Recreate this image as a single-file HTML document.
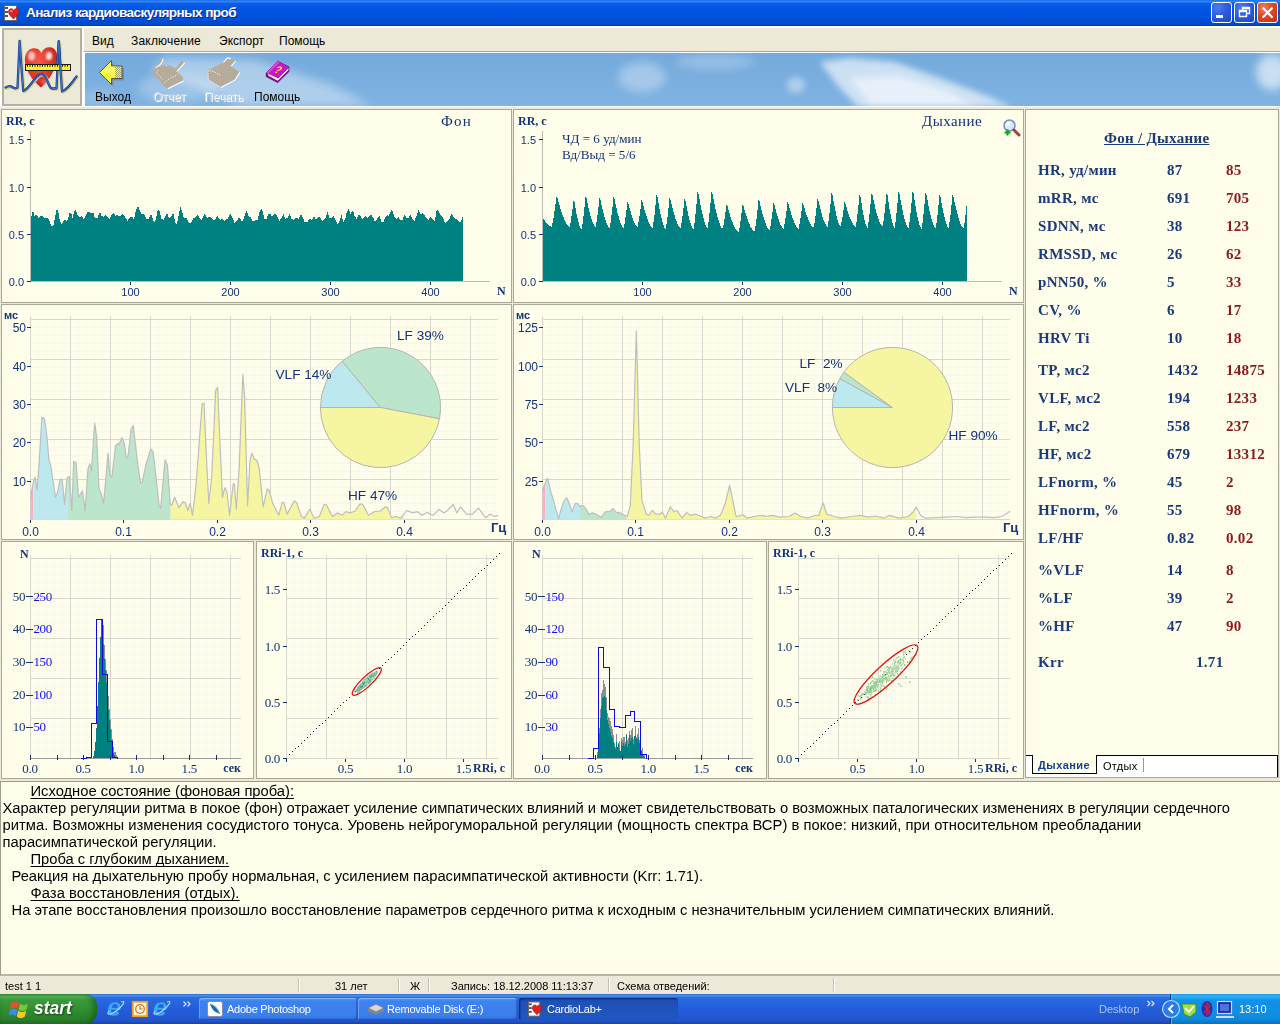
<!DOCTYPE html>
<html lang="ru"><head><meta charset="utf-8"><title>Анализ кардиоваскулярных проб</title>
<style>
*{box-sizing:border-box;margin:0;padding:0}
html,body{width:1280px;height:1024px;overflow:hidden;background:#ECE9D8;font-family:"Liberation Sans",sans-serif;}
.abs{position:absolute}
#title{left:0;top:0;width:1280px;height:26px;background:linear-gradient(#0A5FE8 0,#3C8CF8 4%,#0B5DE3 14%,#0054E3 40%,#0051DF 70%,#0148CE 92%,#0140BC 100%);}
#title .t{left:26px;top:5px;letter-spacing:-.6px;color:#fff;font:bold 13.6px "Liberation Sans",sans-serif;text-shadow:1px 1px 0 #0A2A80;white-space:nowrap}
.wb{top:2px;width:21px;height:21px;border:1px solid #fff;border-radius:3px;background:radial-gradient(circle at 30% 25%,#4C7CF0 0,#2C5CE0 45%,#1F47C8 100%);overflow:hidden}
.wb svg{position:absolute;left:-1px;top:-1px}
.wb.cl{background:radial-gradient(circle at 30% 25%,#F08060 0,#E04820 45%,#C03010 100%)}
#menubar{left:84px;top:28px;width:1196px;height:24px;background:#ECE9D8;border-bottom:1px solid #ACA899}
#menubar span{position:absolute;top:6px;font:12px "Liberation Sans",sans-serif;color:#000;white-space:nowrap}
#toolbar{left:85px;top:53px;width:1195px;height:53px;overflow:hidden;background:#7FB0E0}
.tb{position:absolute;top:37px;font:12px "Liberation Sans",sans-serif;white-space:nowrap;color:#000}
.tb.dis{color:#C8D4E0;text-shadow:1px 1px 0 #fff}
#logo{left:2px;top:28px;width:80px;height:78px;background:#ECE9D8;border:2px solid #B3B0A2;box-shadow:1px 1px 0 #fff,2px 0 0 #fff}
.panel{position:absolute;background:#FFFEEB;border:1px solid #A9A797;overflow:hidden}
.panel svg{position:absolute;left:-1px;top:-1px}
text{white-space:pre}
#rp{font-family:"Liberation Serif",serif;font-weight:bold;font-size:15px;color:#1B3A78;letter-spacing:.3px}
#rp div{position:absolute;white-space:nowrap;line-height:18px}
#rp .r{color:#8B1A1A}
#txt{left:0;top:781px;width:1280px;height:195px;background:#FFFEEB;border:1px solid #9D9B8C;border-width:1px 0 2px 1px;border-color:#9D9B8C #fff #B9B6A6 #9D9B8C;font:14.75px "Liberation Sans",sans-serif;color:#000;line-height:17px}
#txt div{position:absolute;white-space:nowrap}
#txt u{text-decoration:underline;text-underline-offset:2px;text-decoration-skip-ink:none;text-decoration-thickness:1px}
#status{left:0;top:976px;width:1280px;height:18px;background:#ECE9D8;font:11px "Liberation Sans",sans-serif}
#status span{position:absolute;top:4px;white-space:nowrap}
#status i{position:absolute;top:2px;width:2px;height:14px;border-left:1px solid #C5C2B2;border-right:1px solid #fff}
#task{left:0;top:994px;width:1280px;height:30px;background:linear-gradient(#3168D5 0,#4993E6 6%,#2A6BE0 12%,#245DDB 50%,#2254CC 90%,#1941A5 100%)}
#start{left:0;top:0;width:97px;height:30px;border-radius:0 12px 12px 0;background:linear-gradient(#3C9A3C 0,#5CBB5C 8%,#3C9A3C 20%,#2F8A2F 60%,#2A7A2A 100%);box-shadow:inset -3px 0 6px rgba(0,60,0,.5)}
#start b{position:absolute;left:34px;top:4px;color:#fff;font:italic bold 17.5px "Liberation Sans",sans-serif;text-shadow:1px 1px 2px #1A401A}
.tbtn{position:absolute;top:4px;height:22px;letter-spacing:-.25px;border-radius:3px;background:linear-gradient(#5C9CF5,#3C82F0 15%,#3A7FEC 80%,#2E6CD8);color:#fff;font:11px "Liberation Sans",sans-serif;box-shadow:inset 1px 1px 0 rgba(255,255,255,.25), inset -1px -1px 0 rgba(0,0,60,.25)}
.tbtn.act{background:linear-gradient(#1C4FB8,#1E52B8 30%,#2058C0);box-shadow:inset 1px 1px 2px rgba(0,0,40,.6)}
.tbtn span{position:absolute;left:28px;top:5px;white-space:nowrap}
#tray{top:0;height:30px;background:linear-gradient(#1A9AE8 0,#30B0F5 8%,#1292E8 20%,#0E8CE0 80%,#0A70C0 100%);border-left:1px solid #0A3A90;box-shadow:inset 1px 0 0 #40B8F8}
</style></head><body>
<div id="title" class="abs">
<svg class="abs" style="left:3.500px;top:4.500px" width="18" height="17" viewBox="0 0 18 17"><rect x="0.5" y="0.5" width="12" height="15" fill="#fff" stroke="#666"/><rect x="1" y="2" width="3" height="2" fill="#555"/><rect x="1" y="6" width="3" height="2" fill="#555"/><rect x="1" y="10" width="3" height="2" fill="#555"/><path d="M9.5 14 C4 9.5 3.5 5.5 6 4 C8 3 9.3 4.5 9.5 5.5 C9.7 4.5 11.5 3 13.5 4 C16 5.5 15 9.5 9.5 14Z" fill="#E02020" stroke="#A01010" stroke-width=".6"/><ellipse cx="7.3" cy="6.3" rx="1.3" ry="1" fill="#FF9A9A"/></svg>
<div class="abs t">Анализ кардиоваскулярных проб</div>
<div class="abs wb" style="left:1211px"><svg width="21" height="21"><rect x="5" y="13" width="7" height="3" fill="#fff"/></svg></div>
<div class="abs wb" style="left:1234px"><svg width="21" height="21"><path d="M8.5 5.5h7v6h-7z M8.5 6.5h7" fill="none" stroke="#fff" stroke-width="1.4"/><path d="M5.5 8.5h7v6h-7z" fill="#2C62DC" stroke="#fff" stroke-width="1.4"/><path d="M5.5 9.5h7" stroke="#fff" stroke-width="1.4"/></svg></div>
<div class="abs wb cl" style="left:1257px"><svg width="21" height="21"><path d="M6.300 6.300l8.600 8.600M14.900 6.300l-8.600 8.600" stroke="#fff" stroke-width="2.100" stroke-linecap="round"/></svg></div>
</div>
<div id="menubar" class="abs"><span style="left:8px">Вид</span><span style="left:47px;letter-spacing:.2px">Заключение</span><span style="left:135px">Экспорт</span><span style="left:195px">Помощь</span></div>
<div class="abs" style="left:84px;top:52px;width:1196px;height:1px;background:#fff"></div><div class="abs" style="left:0;top:26px;width:1280px;height:2px;background:#fff"></div><div class="abs" style="left:0;top:28px;width:2px;height:79px;background:#fff"></div>
<div id="toolbar" class="abs">
<svg class="abs" style="left:0;top:0" width="1195" height="54"><defs>
<linearGradient id="sky" x1="0" x2="0" y1="0" y2="1"><stop offset="0" stop-color="#74AADC"/><stop offset="1" stop-color="#80B3E2"/></linearGradient>
<filter id="bl" x="-20%" y="-50%" width="140%" height="200%"><feGaussianBlur stdDeviation="5"/></filter>
<filter id="bl2" x="-20%" y="-50%" width="140%" height="200%"><feGaussianBlur stdDeviation="3"/></filter>
</defs><rect width="1195" height="54" fill="url(#sky)"/>
<g transform="translate(-85,-53)"><g filter="url(#bl)" fill="#fff">
<path d="M165 57 L255 60 L330 84 L372 106 L240 106 L200 88 L150 72Z" opacity=".38"/>
<ellipse cx="178" cy="88" rx="40" ry="14" opacity=".25"/>
<ellipse cx="100" cy="98" rx="18" ry="8" opacity=".18"/>
<ellipse cx="642" cy="77" rx="24" ry="15" opacity=".33"/>
<ellipse cx="715" cy="62" rx="40" ry="7" opacity=".25"/>
<ellipse cx="1272" cy="72" rx="16" ry="18" opacity=".6"/>
</g>
<g filter="url(#bl2)" fill="#fff">
<ellipse cx="796" cy="85" rx="9" ry="8" opacity=".4"/>
<path d="M820 62 L850 58 L895 62 L940 78 L985 95 L1012 107 L858 107 L838 86Z" opacity=".62"/>
<path d="M850 78 L900 76 L950 92 L975 107 L872 107Z" opacity=".5"/>
</g></g></svg>
<svg class="abs" style="left:0;top:0" width="260" height="53" viewBox="85 53 260 53">
<defs><pattern id="dith" width="2" height="2" patternUnits="userSpaceOnUse"><rect width="1" height="1" fill="#8A8A80"/><rect x="1" y="1" width="1" height="1" fill="#8A8A80"/></pattern></defs>
<!-- exit arrow -->
<path d="M101.500 74.500 L113.500 62.500 V68 H124 V80.500 H113.500 V86.500Z" fill="#85858A" opacity=".9"/>
<path d="M99.500 72.500 L111.500 60.500 V66 H122 V78.500 H111.500 V84.500Z" fill="#F6F63C" stroke="#4A4A3A" stroke-width=".9" stroke-linejoin="round"/>
<path d="M100.800 72.500 L111 62.300 V66.500 H116 V72.500Z" fill="#FFFF90" opacity=".55"/>
<rect x="115" y="66.500" width="7" height="11.500" fill="url(#dith)" opacity=".8"/>
<!-- report icon (disabled) -->
<g fill="#B6AC9C"><path d="M152.300 71.200 L158.700 66.900 L165.600 64.700 L169.900 65.200 L175.900 68.600 L181.100 60.900 L184.100 62.600 L176.800 71.200 L183.200 77.600 L182.800 80.600 L167.300 88.400 L164.700 86.600 L152.300 73.800Z"/><path d="M153 66.500 C156 65.500 160.500 62 161.500 58.500 L159 57.800 L162.800 58.200 C162.500 62.500 158 66 154 67.800Z"/></g>
<path d="M167.800 88.800 L183.500 81 M176.800 71.500 L184.600 62.800 M155.500 67.500 C159 66 162.800 62.500 163 58.500" fill="none" stroke="#fff" stroke-width="1.100"/>
<path d="M156.500 72.500 L158.500 70 M157 73.500 L162.500 79.500 M164 83 L169 79 M170.500 78 L178 74.500 M166 65.500h2.500" fill="none" stroke="#fff" stroke-width="1" stroke-dasharray="1 1.600"/>
<!-- print icon (disabled) -->
<path d="M207.700 70.300 L223.200 62.600 L227.500 57.900 L235.200 60.900 L230.900 66 L239.500 72 L234.400 79.800 L220.600 87.100 L208.600 79.800Z" fill="#B6AC9C"/>
<path d="M221 87.600 L234.900 80.200 L240 72.200 M231.200 66.200 L235.800 61 M223.500 62.500 L227.500 57.700 L231 58.800" fill="none" stroke="#fff" stroke-width="1.100"/>
<path d="M208.300 79.500 L208 71 L211.500 70.500 L220 75 M209.500 80.800 L219.500 86.800" fill="none" stroke="#fff" stroke-width="1" stroke-dasharray="1.200 1.400"/>
<!-- help book -->
<path d="M266.200 72.900 L277.700 61.300 L288.900 66.900 L288.900 71.600 L277.700 82.600 L266.200 76.500Z" fill="#8C008C" stroke="#500050" stroke-width=".7" stroke-linejoin="round"/>
<path d="M268.200 75.800 L277.800 80.800 L288.500 70 L288.500 68 L278 78.300 L268.200 73.500Z" fill="#F2EEE6"/>
<path d="M266.200 72.900 L277.700 61.300 L288.900 66.900 L278.200 77.600Z" fill="#C818C8"/>
<path d="M266.200 72.900 L277.700 61.300 L279.500 62.200 L268 73.800Z" fill="#E860E8" opacity=".7"/>
<text x="0" y="0" font-family="'Liberation Sans',sans-serif" font-weight="bold" font-size="10.500" fill="#FFE818" transform="translate(278.300 69.800) rotate(14) skewX(-20) translate(-3.200 3.600)">?</text>
</svg>
<span class="tb" style="left:10px">Выход</span><span class="tb dis" style="left:68px">Отчет</span><span class="tb dis" style="left:119px">Печать</span><span class="tb" style="left:169px">Помощь</span>
</div>
<div class="abs" style="left:84px;top:53px;width:1px;height:53px;background:#fff"></div>
<div class="abs" style="left:84px;top:106px;width:1196px;height:1px;background:#fff"></div>
<div id="logo" class="abs"><svg class="abs" style="left:0;top:0" width="76" height="74" viewBox="4 30 76 74">
<defs><radialGradient id="hg" cx="0.42" cy="0.35" r="0.75"><stop offset="0" stop-color="#F25A4A"/><stop offset="0.55" stop-color="#E23428"/><stop offset="1" stop-color="#A81A14"/></radialGradient>
<filter id="hb" x="-20%" y="-20%" width="140%" height="140%"><feGaussianBlur stdDeviation="1.2"/></filter></defs>
<path d="M41 87.500 C22 72 21 52 32 48.500 C37.500 47 40.500 50.500 41.500 53.500 C42.500 49.500 46 46 51.500 47.500 C62 51 58 72 41 87.500Z" fill="#E8E4E0" stroke="#E8E4E0" stroke-width="3" opacity=".8"/>
<path d="M41 87.500 C22 72 21 52 32 48.500 C37.500 47 40.500 50.500 41.500 53.500 C42.500 49.500 46 46 51.500 47.500 C62 51 58 72 41 87.500Z" fill="url(#hg)"/>
<g filter="url(#hb)"><ellipse cx="31.500" cy="56" rx="3.500" ry="4.500" fill="#FFD0C8" opacity=".9"/><ellipse cx="49" cy="56" rx="3" ry="4" fill="#FFE8E0"/><ellipse cx="45" cy="82" rx="4" ry="2.500" fill="#F08070" opacity=".6"/></g>
<g fill="none" stroke-linejoin="round" stroke-linecap="round">
<path id="ecg" d="M5.500 87.500 C8 86 10 85.500 12 87 C14 88.500 16 88.500 17.500 87.500 L19.600 41 L23.200 91 C27 90 31 84 34 80 C37 76 39 74 41.500 74 C45 74 47 80 49 85 C50 87.500 51 88.500 52.500 88.500 L56.500 88.500 L58.800 41.500 L62 91.500 C66 90 70 86 76.500 76.500" stroke="#D8D090" stroke-width="3.300" opacity=".9" transform="translate(.8,.8)"/>
<path d="M5.500 87.500 C8 86 10 85.500 12 87 C14 88.500 16 88.500 17.500 87.500 L19.600 41 L23.200 91 C27 90 31 84 34 80 C37 76 39 74 41.500 74 C45 74 47 80 49 85 C50 87.500 51 88.500 52.500 88.500 L56.500 88.500 L58.800 41.500 L62 91.500 C66 90 70 86 76.500 76.500" stroke="#1C3F8C" stroke-width="2.300"/>
<path d="M5.500 87.500 C8 86 10 85.500 12 87 C14 88.500 16 88.500 17.500 87.500 L19.600 41 L23.200 91 C27 90 31 84 34 80 C37 76 39 74 41.500 74 C45 74 47 80 49 85 C50 87.500 51 88.500 52.500 88.500 L56.500 88.500 L58.800 41.500 L62 91.500 C66 90 70 86 76.500 76.500" stroke="#3C78C8" stroke-width="1"/>
</g>
<rect x="25.500" y="64.500" width="45" height="6" fill="#FFF020" stroke="#181818" stroke-width="1"/>
<path d="M27.500 65v1.800M30 65v1.800M32.500 65v1.800M35 65v1.800M37.500 65v1.800M40 65v1.800M42.500 65v1.800M45 65v1.800M47.500 65v1.800M50 65v1.800M52.500 65v1.800M55 65v1.800M57.500 65v1.800M60 65v1.800M62.500 65v1.800M65 65v1.800M67.500 65v1.800" stroke="#181818" stroke-width="1"/>
<path d="M57.200 63.500 L58.800 41.500 L60.600 71" fill="none" stroke="#1C3F8C" stroke-width="2.300" stroke-linejoin="round"/><path d="M57.200 63.500 L58.800 41.500 L60.600 71" fill="none" stroke="#3C78C8" stroke-width="1" stroke-linejoin="round"/>
</svg></div>
<div class="panel" style="left:1px;top:109px;width:511px;height:194px"></div><div class="panel" style="left:513px;top:109px;width:511px;height:194px"></div><div class="panel" style="left:1px;top:304px;width:511px;height:236px"></div><div class="panel" style="left:513px;top:304px;width:511px;height:236px"></div><div class="panel" style="left:1px;top:541px;width:253px;height:238px"></div><div class="panel" style="left:256px;top:541px;width:256px;height:238px"></div><div class="panel" style="left:513px;top:541px;width:254px;height:238px"></div><div class="panel" style="left:768px;top:541px;width:256px;height:238px"></div>
<svg class="abs" style="left:0;top:0" width="1280" height="1024" viewBox="0 0 1280 1024">
<path d="M31 281.5V216H32V212H33V212H34V216H35V215H36V215H37V216H38V218H39V217H40V216H41V216H42V216H43V217H44V218H45V218H46V218H47V218H48V219H49V221H50V224H51V226H52V226H53V225H54V220H55V215H56V210H57V210H58V213H59V219H60V222H61V224H62V223H63V221H64V220H65V220H66V221H67V220H68V217H69V213H70V213H71V214H72V218H73V214H74V211H75V210H76V212H77V215H78V216H79V217H80V217H81V216H82V217H83V219H84V218H85V216H86V214H87V212H88V212H89V212H90V213H91V213H92V213H93V213H94V217H95V218H96V218H97V218H98V215H99V213H100V213H101V216H102V216H103V217H104V216H105V215H106V216H107V217H108V218H109V219H110V217H111V215H112V214H113V213H114V214H115V216H116V215H117V215H118V216H119V216H120V216H121V215H122V214H123V215H124V216H125V218H126V219H127V221H128V219H129V218H130V217H131V217H132V217H133V219H134V217H135V212H136V209H137V207H138V207H139V210H140V212H141V214H142V214H143V214H144V215H145V217H146V219H147V219H148V219H149V217H150V215H151V215H152V218H153V221H154V222H155V220H156V216H157V211H158V210H159V211H160V215H161V219H162V219H163V220H164V218H165V216H166V214H167V214H168V217H169V218H170V217H171V216H172V214H173V214H174V219H175V223H176V224H177V221H178V216H179V211H180V207H181V210H182V213H183V217H184V218H185V218H186V218H187V220H188V222H189V223H190V223H191V222H192V220H193V218H194V218H195V217H196V216H197V215H198V216H199V218H200V219H201V220H202V218H203V216H204V214H205V215H206V217H207V218H208V217H209V217H210V217H211V218H212V219H213V220H214V220H215V219H216V217H217V216H218V218H219V219H220V220H221V219H222V219H223V220H224V221H225V220H226V219H227V219H228V217H229V215H230V214H231V216H232V218H233V220H234V223H235V222H236V221H237V220H238V218H239V218H240V219H241V221H242V221H243V219H244V216H245V213H246V211H247V213H248V216H249V217H250V217H251V219H252V221H253V221H254V221H255V220H256V220H257V220H258V216H259V212H260V210H261V209H262V211H263V215H264V219H265V219H266V219H267V216H268V214H269V214H270V214H271V216H272V216H273V215H274V214H275V214H276V215H277V217H278V219H279V221H280V219H281V218H282V216H283V214H284V217H285V219H286V218H287V218H288V216H289V214H290V216H291V219H292V219H293V220H294V219H295V218H296V218H297V218H298V219H299V217H300V215H301V215H302V217H303V219H304V222H305V222H306V222H307V222H308V220H309V219H310V219H311V220H312V219H313V217H314V217H315V219H316V219H317V218H318V217H319V217H320V218H321V220H322V221H323V220H324V219H325V218H326V215H327V212H328V215H329V218H330V218H331V218H332V217H333V216H334V218H335V220H336V222H337V224H338V223H339V221H340V218H341V215H342V219H343V222H344V220H345V218H346V213H347V211H348V209H349V211H350V214H351V212H352V211H353V212H354V216H355V217H356V219H357V217H358V215H359V215H360V216H361V218H362V219H363V218H364V217H365V216H366V217H367V218H368V217H369V216H370V215H371V215H372V217H373V218H374V221H375V221H376V220H377V218H378V217H379V216H380V219H381V222H382V222H383V222H384V219H385V217H386V216H387V215H388V216H389V214H390V212H391V210H392V211H393V214H394V217H395V218H396V219H397V218H398V217H399V219H400V220H401V220H402V220H403V217H404V215H405V216H406V218H407V218H408V218H409V216H410V215H411V217H412V219H413V220H414V221H415V218H416V216H417V213H418V210H419V212H420V214H421V214H422V213H423V214H424V215H425V217H426V218H427V219H428V220H429V218H430V217H431V218H432V219H433V220H434V221H435V217H436V211H437V210H438V211H439V213H440V215H441V216H442V217H443V219H444V222H445V223H446V222H447V221H448V220H449V219H450V216H451V214H452V215H453V217H454V218H455V219H456V219H457V220H458V221H459V222H460V222H461V220H462V217H463V281.5Z" fill="#008080" shape-rendering="crispEdges"/>
<path d="M30.5 131V282M30 281.5H490" stroke="#BDBDB5" fill="none" shape-rendering="crispEdges"/>
<text x="24" y="144.0" font-family="'Liberation Sans',sans-serif" font-size="11" font-weight="normal" fill="#12337A" text-anchor="end" >1.5</text>
<text x="24" y="192.0" font-family="'Liberation Sans',sans-serif" font-size="11" font-weight="normal" fill="#12337A" text-anchor="end" >1.0</text>
<text x="24" y="239.0" font-family="'Liberation Sans',sans-serif" font-size="11" font-weight="normal" fill="#12337A" text-anchor="end" >0.5</text>
<text x="24" y="286.0" font-family="'Liberation Sans',sans-serif" font-size="11" font-weight="normal" fill="#12337A" text-anchor="end" >0.0</text>
<text x="130.5" y="296" font-family="'Liberation Sans',sans-serif" font-size="11" font-weight="normal" fill="#12337A" text-anchor="middle" >100</text>
<text x="230.5" y="296" font-family="'Liberation Sans',sans-serif" font-size="11" font-weight="normal" fill="#12337A" text-anchor="middle" >200</text>
<text x="330.5" y="296" font-family="'Liberation Sans',sans-serif" font-size="11" font-weight="normal" fill="#12337A" text-anchor="middle" >300</text>
<text x="430.5" y="296" font-family="'Liberation Sans',sans-serif" font-size="11" font-weight="normal" fill="#12337A" text-anchor="middle" >400</text>
<path d="M27 139.5H31M27 187.5H31M27 234.5H31M27 281.5H31M130.5 282V285M230.5 282V285M330.5 282V285M430.5 282V285" stroke="#12337A" fill="none" shape-rendering="crispEdges"/>
<text x="6" y="125" font-family="'Liberation Serif',serif" font-size="12" font-weight="bold" fill="#12337A" text-anchor="start" >RR, c</text>
<text x="497" y="295" font-family="'Liberation Serif',serif" font-size="12" font-weight="bold" fill="#12337A" text-anchor="start" >N</text>
<text x="441" y="125.5" font-family="'Liberation Serif',serif" font-size="15" font-weight="normal" fill="#12337A" text-anchor="start" letter-spacing="1.2">Фон</text>
<path d="M543 281.5V219H544V220H545V222H546V223H547V224H548V225H549V226H550V226H551V227H552V223H553V218H554V211H555V204H556V197H557V198H558V202H559V205H560V209H561V212H562V215H563V217H564V220H565V222H566V224H567V225H568V226H569V227H570V223H571V216H572V209H573V201H574V202H575V208H576V214H577V218H578V222H579V226H580V228H581V229H582V224H583V216H584V207H585V197H586V198H587V203H588V208H589V212H590V216H591V219H592V222H593V224H594V226H595V227H596V222H597V215H598V207H599V198H600V200H601V205H602V209H603V213H604V217H605V220H606V223H607V225H608V227H609V228H610V223H611V215H612V207H613V197H614V199H615V204H616V208H617V213H618V216H619V220H620V223H621V225H622V227H623V228H624V224H625V217H626V210H627V202H628V204H629V208H630V211H631V215H632V218H633V221H634V223H635V225H636V226H637V227H638V222H639V216H640V209H641V200H642V202H643V206H644V210H645V213H646V216H647V219H648V222H649V224H650V226H651V227H652V228H653V222H654V215H655V205H656V195H657V197H658V203H659V209H660V214H661V218H662V222H663V225H664V228H665V229H666V224H667V217H668V208H669V198H670V200H671V204H672V208H673V212H674V215H675V219H676V221H677V224H678V226H679V227H680V228H681V223H682V216H683V208H684V199H685V201H686V206H687V211H688V216H689V220H690V223H691V226H692V228H693V229H694V223H695V214H696V204H697V192H698V194H699V199H700V205H701V210H702V214H703V218H704V222H705V225H706V227H707V228H708V222H709V213H710V203H711V192H712V194H713V199H714V204H715V209H716V213H717V217H718V220H719V223H720V226H721V228H722V228H723V225H724V219H725V212H726V205H727V206H728V210H729V213H730V217H731V220H732V222H733V225H734V227H735V229H736V230H737V231H738V232H739V228H740V221H741V213H742V205H743V206H744V210H745V213H746V216H747V219H748V222H749V224H750V227H751V228H752V230H753V231H754V231H755V226H756V219H757V210H758V200H759V201H760V206H761V210H762V214H763V217H764V220H765V223H766V226H767V228H768V229H769V230H770V226H771V219H772V212H773V203H774V205H775V209H776V213H777V216H778V219H779V222H780V225H781V226H782V228H783V229H784V224H785V218H786V211H787V202H788V204H789V208H790V211H791V215H792V218H793V220H794V223H795V225H796V227H797V228H798V229H799V224H800V218H801V211H802V203H803V205H804V208H805V212H806V215H807V217H808V220H809V222H810V224H811V226H812V227H813V227H814V223H815V216H816V208H817V199H818V201H819V205H820V209H821V213H822V217H823V220H824V222H825V224H826V226H827V227H828V221H829V213H830V204H831V193H832V195H833V201H834V206H835V211H836V216H837V220H838V223H839V225H840V226H841V222H842V217H843V210H844V202H845V204H846V207H847V211H848V214H849V217H850V219H851V221H852V223H853V225H854V226H855V227H856V222H857V214H858V205H859V195H860V197H861V203H862V210H863V215H864V220H865V224H866V226H867V228H868V222H869V214H870V204H871V194H872V195H873V200H874V204H875V209H876V213H877V216H878V219H879V222H880V224H881V225H882V226H883V221H884V213H885V204H886V194H887V195H888V202H889V209H890V214H891V219H892V223H893V226H894V228H895V222H896V213H897V203H898V192H899V194H900V200H901V205H902V210H903V215H904V219H905V222H906V225H907V227H908V228H909V222H910V213H911V203H912V192H913V193H914V200H915V206H916V212H917V217H918V221H919V225H920V227H921V229H922V223H923V214H924V204H925V193H926V195H927V200H928V206H929V211H930V215H931V219H932V222H933V225H934V227H935V228H936V223H937V215H938V205H939V195H940V197H941V203H942V208H943V213H944V217H945V221H946V224H947V227H948V228H949V222H950V215H951V205H952V195H953V197H954V202H955V206H956V210H957V214H958V218H959V221H960V224H961V226H962V227H963V228H964V223H965V215H966V206H967V281.5Z" fill="#008080" shape-rendering="crispEdges"/>
<path d="M542.5 131V282M542 281.5H1002" stroke="#BDBDB5" fill="none" shape-rendering="crispEdges"/>
<text x="536" y="144.0" font-family="'Liberation Sans',sans-serif" font-size="11" font-weight="normal" fill="#12337A" text-anchor="end" >1.5</text>
<text x="536" y="192.0" font-family="'Liberation Sans',sans-serif" font-size="11" font-weight="normal" fill="#12337A" text-anchor="end" >1.0</text>
<text x="536" y="239.0" font-family="'Liberation Sans',sans-serif" font-size="11" font-weight="normal" fill="#12337A" text-anchor="end" >0.5</text>
<text x="536" y="286.0" font-family="'Liberation Sans',sans-serif" font-size="11" font-weight="normal" fill="#12337A" text-anchor="end" >0.0</text>
<text x="642.5" y="296" font-family="'Liberation Sans',sans-serif" font-size="11" font-weight="normal" fill="#12337A" text-anchor="middle" >100</text>
<text x="742.5" y="296" font-family="'Liberation Sans',sans-serif" font-size="11" font-weight="normal" fill="#12337A" text-anchor="middle" >200</text>
<text x="842.5" y="296" font-family="'Liberation Sans',sans-serif" font-size="11" font-weight="normal" fill="#12337A" text-anchor="middle" >300</text>
<text x="942.5" y="296" font-family="'Liberation Sans',sans-serif" font-size="11" font-weight="normal" fill="#12337A" text-anchor="middle" >400</text>
<path d="M539 139.5H543M539 187.5H543M539 234.5H543M539 281.5H543M642.5 282V285M742.5 282V285M842.5 282V285M942.5 282V285" stroke="#12337A" fill="none" shape-rendering="crispEdges"/>
<text x="518" y="125" font-family="'Liberation Serif',serif" font-size="12" font-weight="bold" fill="#12337A" text-anchor="start" >RR, c</text>
<text x="1009" y="295" font-family="'Liberation Serif',serif" font-size="12" font-weight="bold" fill="#12337A" text-anchor="start" >N</text>
<text x="922" y="125.5" font-family="'Liberation Serif',serif" font-size="15" font-weight="normal" fill="#12337A" text-anchor="start" letter-spacing="0.45">Дыхание</text>
<text x="562" y="142.5" font-family="'Liberation Serif',serif" font-size="13.1" font-weight="normal" fill="#12337A" text-anchor="start" >ЧД = 6 уд/мин</text>
<text x="562" y="159" font-family="'Liberation Serif',serif" font-size="13.1" font-weight="normal" fill="#12337A" text-anchor="start" >Вд/Выд = 5/6</text>
<g transform="translate(1003,119)"><circle cx="6.500" cy="6.500" r="5.500" fill="#D8ECFF" stroke="#7090C0" stroke-width="1.500"/><circle cx="5" cy="5" r="2" fill="#fff"/><path d="M11 11l5 5" stroke="#A04040" stroke-width="3" stroke-linecap="round"/><path d="M1.500 13.500h6M4.500 10.500v6" stroke="#10A010" stroke-width="2.200"/></g>
<path d="M38.5 319V519M46.5 319V519M54.5 319V519M62.5 319V519M78.5 319V519M86.5 319V519M94.5 319V519M102.5 319V519M118.5 319V519M126.5 319V519M134.5 319V519M142.5 319V519M158.5 319V519M166.5 319V519M174.5 319V519M182.5 319V519M198.5 319V519M206.5 319V519M214.5 319V519M222.5 319V519M238.5 319V519M246.5 319V519M254.5 319V519M262.5 319V519M278.5 319V519M286.5 319V519M294.5 319V519M302.5 319V519M318.5 319V519M326.5 319V519M334.5 319V519M342.5 319V519M358.5 319V519M366.5 319V519M374.5 319V519M382.5 319V519M398.5 319V519M406.5 319V519M414.5 319V519M422.5 319V519M438.5 319V519M446.5 319V519M454.5 319V519M462.5 319V519M478.5 319V519M486.5 319V519M494.5 319V519M30 511.5H498M30 503.5H498M30 495.5H498M30 487.5H498M30 471.5H498M30 463.5H498M30 455.5H498M30 447.5H498M30 431.5H498M30 423.5H498M30 415.5H498M30 407.5H498M30 391.5H498M30 383.5H498M30 375.5H498M30 367.5H498M30 351.5H498M30 343.5H498M30 335.5H498M30 327.5H498" stroke="#F7F7EC" stroke-width="1" fill="none" shape-rendering="crispEdges"/>
<path d="M30.5 316V519M70.5 316V519M110.5 316V519M150.5 316V519M190.5 316V519M230.5 316V519M270.5 316V519M310.5 316V519M350.5 316V519M390.5 316V519M430.5 316V519M470.5 316V519M30 519.5H498M30 479.5H498M30 439.5H498M30 399.5H498M30 359.5H498M30 319.5H498" stroke="#D7D7CF" stroke-width="1" fill="none" shape-rendering="crispEdges"/>
<path d="M30.5 519.5L30.5 498.5L30.6 498.5L31.6 491.4L33.3 482.7L33.3 519.5Z" fill="#F4B2C0"/>
<path d="M33.3 519.5L33.3 482.7L33.5 481.8L35.2 477.0L37.1 490.2L39.0 465.0L41.9 417.2L44.3 418.4L46.6 433.9L49.0 460.3L50.7 465.0L53.1 481.8L55.5 497.3L57.4 492.5L60.3 479.4L62.2 479.4L64.6 504.5L67.0 478.2L67.9 477.6L67.9 519.5Z" fill="#BDE9EE"/>
<path d="M67.9 519.5L67.9 477.6L69.4 476.5L71.8 510.5L73.7 461.5L76.1 462.6L78.5 497.3L82.5 490.9L85.2 510.5L88.0 468.6L89.9 463.8L91.4 471.0L94.7 423.2L96.6 436.3L99.0 489.0L100.9 492.5L103.6 503.3L108.1 453.1L110.0 475.8L111.9 477.0L115.5 445.9L117.9 443.5L118.9 444.7L122.0 437.5L124.4 443.5L126.3 457.9L128.0 456.7L131.1 429.2L133.2 425.6L135.1 441.1L137.5 462.6L140.6 483.0L142.3 481.8L145.9 465.0L150.7 448.8L153.1 451.9L155.5 472.2L159.1 505.7L160.7 508.1L165.0 459.8L167.4 465.0L170.3 504.5L170.7 504.7L170.7 519.5Z" fill="#BCE6CB"/>
<path d="M170.7 519.5L170.7 504.7L171.7 505.2L174.6 497.3L178.9 507.6L183.0 501.6L185.4 502.8L187.8 510.5L190.2 503.3L192.5 515.3L196.1 484.2L202.1 404.0L204.0 402.9L206.2 453.1L208.8 503.3L211.7 477.0L215.7 390.4L217.7 387.3L219.6 433.9L222.4 497.3L224.8 487.8L226.8 491.4L229.6 515.3L233.2 483.7L234.4 484.2L236.3 509.3L239.2 467.4L242.8 374.1L244.5 395.7L247.6 505.7L250.0 460.3L251.9 453.1L254.3 459.1L256.7 460.3L259.1 467.4L263.2 506.9L267.2 489.0L269.1 490.2L272.7 503.3L278.7 515.3L282.3 502.1L284.0 502.8L287.1 514.1L294.3 500.9L296.6 502.8L301.4 516.5L304.5 518.1L309.8 509.3L314.1 518.1L319.4 516.5L324.1 504.5L326.5 505.2L332.5 516.5L337.3 512.9L342.1 515.3L345.7 511.7L350.5 512.9L355.2 511.0L360.0 503.8L362.9 504.5L368.4 515.3L374.4 511.7L380.4 511.0L385.1 506.9L387.5 507.6L391.6 517.7L395.9 516.5L400.7 518.1L404.3 513.5L404.3 519.5Z" fill="#F6F6A2"/>
<path d="M30.6 498.5L31.6 491.4L33.5 481.8L35.2 477.0L37.1 490.2L39.0 465.0L41.9 417.2L44.3 418.4L46.6 433.9L49.0 460.3L50.7 465.0L53.1 481.8L55.5 497.3L57.4 492.5L60.3 479.4L62.2 479.4L64.6 504.5L67.0 478.2L69.4 476.5L71.8 510.5L73.7 461.5L76.1 462.6L78.5 497.3L82.5 490.9L85.2 510.5L88.0 468.6L89.9 463.8L91.4 471.0L94.7 423.2L96.6 436.3L99.0 489.0L100.9 492.5L103.6 503.3L108.1 453.1L110.0 475.8L111.9 477.0L115.5 445.9L117.9 443.5L118.9 444.7L122.0 437.5L124.4 443.5L126.3 457.9L128.0 456.7L131.1 429.2L133.2 425.6L135.1 441.1L137.5 462.6L140.6 483.0L142.3 481.8L145.9 465.0L150.7 448.8L153.1 451.9L155.5 472.2L159.1 505.7L160.7 508.1L165.0 459.8L167.4 465.0L170.3 504.5L171.7 505.2L174.6 497.3L178.9 507.6L183.0 501.6L185.4 502.8L187.8 510.5L190.2 503.3L192.5 515.3L196.1 484.2L202.1 404.0L204.0 402.9L206.2 453.1L208.8 503.3L211.7 477.0L215.7 390.4L217.7 387.3L219.6 433.9L222.4 497.3L224.8 487.8L226.8 491.4L229.6 515.3L233.2 483.7L234.4 484.2L236.3 509.3L239.2 467.4L242.8 374.1L244.5 395.7L247.6 505.7L250.0 460.3L251.9 453.1L254.3 459.1L256.7 460.3L259.1 467.4L263.2 506.9L267.2 489.0L269.1 490.2L272.7 503.3L278.7 515.3L282.3 502.1L284.0 502.8L287.1 514.1L294.3 500.9L296.6 502.8L301.4 516.5L304.5 518.1L309.8 509.3L314.1 518.1L319.4 516.5L324.1 504.5L326.5 505.2L332.5 516.5L337.3 512.9L342.1 515.3L345.7 511.7L350.5 512.9L355.2 511.0L360.0 503.8L362.9 504.5L368.4 515.3L374.4 511.7L380.4 511.0L385.1 506.9L387.5 507.6L391.6 517.7L395.9 516.5L400.7 518.1L406.7 510.5L412.6 512.9L417.4 511.7L422.2 515.3L427.0 512.4L433.0 515.3L439.0 509.3L443.7 512.9L447.3 510.5L453.3 504.5L456.9 512.9L460.5 506.9L466.5 514.1L472.4 514.1L478.4 508.1L485.6 517.7L490.4 514.1L494.0 516.5L498.3 515.3" fill="none" stroke="#BEBEBE" stroke-width="1.2" stroke-linejoin="round"/>
<text x="26" y="332.0" font-family="'Liberation Sans',sans-serif" font-size="12" font-weight="normal" fill="#12337A" text-anchor="end" >50</text>
<text x="26" y="371.0" font-family="'Liberation Sans',sans-serif" font-size="12" font-weight="normal" fill="#12337A" text-anchor="end" >40</text>
<text x="26" y="409.0" font-family="'Liberation Sans',sans-serif" font-size="12" font-weight="normal" fill="#12337A" text-anchor="end" >30</text>
<text x="26" y="447.0" font-family="'Liberation Sans',sans-serif" font-size="12" font-weight="normal" fill="#12337A" text-anchor="end" >20</text>
<text x="26" y="486.0" font-family="'Liberation Sans',sans-serif" font-size="12" font-weight="normal" fill="#12337A" text-anchor="end" >10</text>
<text x="30.5" y="536" font-family="'Liberation Sans',sans-serif" font-size="12" font-weight="normal" fill="#12337A" text-anchor="middle" >0.0</text>
<text x="123.5" y="536" font-family="'Liberation Sans',sans-serif" font-size="12" font-weight="normal" fill="#12337A" text-anchor="middle" >0.1</text>
<text x="217.5" y="536" font-family="'Liberation Sans',sans-serif" font-size="12" font-weight="normal" fill="#12337A" text-anchor="middle" >0.2</text>
<text x="310.5" y="536" font-family="'Liberation Sans',sans-serif" font-size="12" font-weight="normal" fill="#12337A" text-anchor="middle" >0.3</text>
<text x="404.5" y="536" font-family="'Liberation Sans',sans-serif" font-size="12" font-weight="normal" fill="#12337A" text-anchor="middle" >0.4</text>
<path d="M27 327.5H31M27 366.5H31M27 404.5H31M27 442.5H31M27 481.5H31M30.5 520V523M123.5 520V523M217.5 520V523M310.5 520V523M404.5 520V523" stroke="#12337A" fill="none" shape-rendering="crispEdges"/>
<text x="4" y="319" font-family="'Liberation Sans',sans-serif" font-size="11" font-weight="bold" fill="#12337A" text-anchor="start" >мс</text>
<text x="491" y="532" font-family="'Liberation Sans',sans-serif" font-size="13" font-weight="bold" fill="#12337A" text-anchor="start" >Гц</text>
<path d="M380.5 407.5L320.40 407.50A60.1 60.1 0 0 1 342.19 361.19Z" fill="#BDE9EE" stroke="#B4B4B4" stroke-width="1"/>
<path d="M380.5 407.5L342.19 361.19A60.1 60.1 0 0 1 439.54 418.76Z" fill="#BCE6CB" stroke="#B4B4B4" stroke-width="1"/>
<path d="M380.5 407.5L439.54 418.76A60.1 60.1 0 0 1 320.40 407.50Z" fill="#F6F6A2" stroke="#B4B4B4" stroke-width="1"/>
<text x="397" y="339.5" font-family="'Liberation Sans',sans-serif" font-size="13.6" font-weight="normal" fill="#12337A" text-anchor="start" xml:space="preserve">LF 39%</text>
<text x="275.5" y="379" font-family="'Liberation Sans',sans-serif" font-size="13.6" font-weight="normal" fill="#12337A" text-anchor="start" xml:space="preserve">VLF 14%</text>
<text x="348" y="499.5" font-family="'Liberation Sans',sans-serif" font-size="13.6" font-weight="normal" fill="#12337A" text-anchor="start" xml:space="preserve">HF 47%</text>
<path d="M550.5 319V519M558.5 319V519M566.5 319V519M574.5 319V519M590.5 319V519M598.5 319V519M606.5 319V519M614.5 319V519M630.5 319V519M638.5 319V519M646.5 319V519M654.5 319V519M670.5 319V519M678.5 319V519M686.5 319V519M694.5 319V519M710.5 319V519M718.5 319V519M726.5 319V519M734.5 319V519M750.5 319V519M758.5 319V519M766.5 319V519M774.5 319V519M790.5 319V519M798.5 319V519M806.5 319V519M814.5 319V519M830.5 319V519M838.5 319V519M846.5 319V519M854.5 319V519M870.5 319V519M878.5 319V519M886.5 319V519M894.5 319V519M910.5 319V519M918.5 319V519M926.5 319V519M934.5 319V519M950.5 319V519M958.5 319V519M966.5 319V519M974.5 319V519M990.5 319V519M998.5 319V519M1006.5 319V519M542 511.5H1010M542 503.5H1010M542 495.5H1010M542 487.5H1010M542 471.5H1010M542 463.5H1010M542 455.5H1010M542 447.5H1010M542 431.5H1010M542 423.5H1010M542 415.5H1010M542 407.5H1010M542 391.5H1010M542 383.5H1010M542 375.5H1010M542 367.5H1010M542 351.5H1010M542 343.5H1010M542 335.5H1010M542 327.5H1010" stroke="#F7F7EC" stroke-width="1" fill="none" shape-rendering="crispEdges"/>
<path d="M542.5 316V519M582.5 316V519M622.5 316V519M662.5 316V519M702.5 316V519M742.5 316V519M782.5 316V519M822.5 316V519M862.5 316V519M902.5 316V519M942.5 316V519M982.5 316V519M542 519.5H1010M542 479.5H1010M542 439.5H1010M542 399.5H1010M542 359.5H1010M542 319.5H1010" stroke="#D7D7CF" stroke-width="1" fill="none" shape-rendering="crispEdges"/>
<path d="M542.5 519.5L542.5 491.4L542.5 491.4L544.7 484.2L545.3 482.9L545.3 519.5Z" fill="#F4B2C0"/>
<path d="M545.3 519.5L545.3 482.9L547.6 478.2L550.7 491.4L554.3 503.3L558.6 518.9L561.4 508.1L564.5 499.7L566.9 498.0L569.3 503.3L572.2 511.7L575.1 503.3L577.5 503.3L579.4 506.2L579.9 506.1L579.9 519.5Z" fill="#BDE9EE"/>
<path d="M579.9 519.5L579.9 506.1L583.0 505.7L585.3 508.1L588.9 514.1L592.5 512.9L596.1 514.1L600.9 517.2L605.7 511.7L609.3 511.7L612.9 508.6L616.4 512.4L620.0 512.9L623.6 514.8L626.6 516.2L626.6 519.5Z" fill="#BCE6CB"/>
<path d="M626.6 519.5L626.6 516.2L627.2 516.5L630.3 505.7L633.2 443.5L636.3 331.1L639.2 443.5L642.0 500.9L646.3 514.1L648.7 515.3L652.3 510.5L655.9 514.1L659.5 514.1L662.6 512.4L665.5 518.1L670.3 506.9L673.8 511.7L677.0 510.5L682.2 518.1L686.5 512.4L690.6 515.3L695.4 514.1L701.4 516.5L704.9 518.1L710.9 516.5L715.7 518.1L720.5 515.3L725.3 503.3L729.6 485.4L732.4 498.5L736.0 516.5L743.2 514.8L746.8 518.1L756.4 516.0L763.5 515.3L765.0 516.5L772.2 515.3L779.4 517.2L788.9 516.5L794.9 512.9L800.9 516.5L808.1 518.1L815.2 515.3L818.8 515.3L823.1 502.8L826.7 514.1L834.4 516.5L841.5 518.1L851.1 516.5L860.7 515.3L867.9 517.2L875.0 516.0L884.6 518.1L889.4 515.3L898.9 518.1L908.5 516.5L913.3 511.7L916.3 507.1L916.3 519.5Z" fill="#F6F6A2"/>
<path d="M542.5 491.4L544.7 484.2L547.6 478.2L550.7 491.4L554.3 503.3L558.6 518.9L561.4 508.1L564.5 499.7L566.9 498.0L569.3 503.3L572.2 511.7L575.1 503.3L577.5 503.3L579.4 506.2L583.0 505.7L585.3 508.1L588.9 514.1L592.5 512.9L596.1 514.1L600.9 517.2L605.7 511.7L609.3 511.7L612.9 508.6L616.4 512.4L620.0 512.9L623.6 514.8L627.2 516.5L630.3 505.7L633.2 443.5L636.3 331.1L639.2 443.5L642.0 500.9L646.3 514.1L648.7 515.3L652.3 510.5L655.9 514.1L659.5 514.1L662.6 512.4L665.5 518.1L670.3 506.9L673.8 511.7L677.0 510.5L682.2 518.1L686.5 512.4L690.6 515.3L695.4 514.1L701.4 516.5L704.9 518.1L710.9 516.5L715.7 518.1L720.5 515.3L725.3 503.3L729.6 485.4L732.4 498.5L736.0 516.5L743.2 514.8L746.8 518.1L756.4 516.0L763.5 515.3L765.0 516.5L772.2 515.3L779.4 517.2L788.9 516.5L794.9 512.9L800.9 516.5L808.1 518.1L815.2 515.3L818.8 515.3L823.1 502.8L826.7 514.1L834.4 516.5L841.5 518.1L851.1 516.5L860.7 515.3L867.9 517.2L875.0 516.0L884.6 518.1L889.4 515.3L898.9 518.1L908.5 516.5L913.3 511.7L916.4 506.9L920.5 515.3L925.3 518.1L937.2 517.7L946.8 517.2L956.4 516.5L965.9 517.7L975.5 517.2L985.1 517.2L994.6 517.7L1001.8 516.5L1010.2 511.2" fill="none" stroke="#BEBEBE" stroke-width="1.2" stroke-linejoin="round"/>
<text x="538" y="332.0" font-family="'Liberation Sans',sans-serif" font-size="12" font-weight="normal" fill="#12337A" text-anchor="end" >125</text>
<text x="538" y="371.0" font-family="'Liberation Sans',sans-serif" font-size="12" font-weight="normal" fill="#12337A" text-anchor="end" >100</text>
<text x="538" y="409.0" font-family="'Liberation Sans',sans-serif" font-size="12" font-weight="normal" fill="#12337A" text-anchor="end" >75</text>
<text x="538" y="447.0" font-family="'Liberation Sans',sans-serif" font-size="12" font-weight="normal" fill="#12337A" text-anchor="end" >50</text>
<text x="538" y="486.0" font-family="'Liberation Sans',sans-serif" font-size="12" font-weight="normal" fill="#12337A" text-anchor="end" >25</text>
<text x="542.5" y="536" font-family="'Liberation Sans',sans-serif" font-size="12" font-weight="normal" fill="#12337A" text-anchor="middle" >0.0</text>
<text x="635.5" y="536" font-family="'Liberation Sans',sans-serif" font-size="12" font-weight="normal" fill="#12337A" text-anchor="middle" >0.1</text>
<text x="729.5" y="536" font-family="'Liberation Sans',sans-serif" font-size="12" font-weight="normal" fill="#12337A" text-anchor="middle" >0.2</text>
<text x="822.5" y="536" font-family="'Liberation Sans',sans-serif" font-size="12" font-weight="normal" fill="#12337A" text-anchor="middle" >0.3</text>
<text x="916.5" y="536" font-family="'Liberation Sans',sans-serif" font-size="12" font-weight="normal" fill="#12337A" text-anchor="middle" >0.4</text>
<path d="M539 327.5H543M539 366.5H543M539 404.5H543M539 442.5H543M539 481.5H543M542.5 520V523M635.5 520V523M729.5 520V523M822.5 520V523M916.5 520V523" stroke="#12337A" fill="none" shape-rendering="crispEdges"/>
<text x="516" y="319" font-family="'Liberation Sans',sans-serif" font-size="11" font-weight="bold" fill="#12337A" text-anchor="start" >мс</text>
<text x="1003" y="532" font-family="'Liberation Sans',sans-serif" font-size="13" font-weight="bold" fill="#12337A" text-anchor="start" >Гц</text>
<path d="M892.5 407.5L832.40 407.50A60.1 60.1 0 0 1 839.83 378.55Z" fill="#BDE9EE" stroke="#B4B4B4" stroke-width="1"/>
<path d="M892.5 407.5L839.83 378.55A60.1 60.1 0 0 1 843.88 372.17Z" fill="#BCE6CB" stroke="#B4B4B4" stroke-width="1"/>
<path d="M892.5 407.5L843.88 372.17A60.1 60.1 0 1 1 832.40 407.50Z" fill="#F6F6A2" stroke="#B4B4B4" stroke-width="1"/>
<text x="799.5" y="367.5" font-family="'Liberation Sans',sans-serif" font-size="13.6" font-weight="normal" fill="#12337A" text-anchor="start" xml:space="preserve">LF  2%</text>
<text x="785" y="391.5" font-family="'Liberation Sans',sans-serif" font-size="13.6" font-weight="normal" fill="#12337A" text-anchor="start" xml:space="preserve">VLF  8%</text>
<text x="948.5" y="439.5" font-family="'Liberation Sans',sans-serif" font-size="13.6" font-weight="normal" fill="#12337A" text-anchor="start" xml:space="preserve">HF 90%</text>
<path d="M38.5 558V758M46.5 558V758M54.5 558V758M62.5 558V758M78.5 558V758M86.5 558V758M94.5 558V758M102.5 558V758M118.5 558V758M126.5 558V758M134.5 558V758M142.5 558V758M158.5 558V758M166.5 558V758M174.5 558V758M182.5 558V758M198.5 558V758M206.5 558V758M214.5 558V758M222.5 558V758M238.5 558V758M30 750.5H241M30 742.5H241M30 734.5H241M30 726.5H241M30 710.5H241M30 702.5H241M30 694.5H241M30 686.5H241M30 670.5H241M30 662.5H241M30 654.5H241M30 646.5H241M30 630.5H241M30 622.5H241M30 614.5H241M30 606.5H241M30 590.5H241M30 582.5H241M30 574.5H241M30 566.5H241" stroke="#F7F7EC" stroke-width="1" fill="none" shape-rendering="crispEdges"/>
<path d="M30.5 555V758M70.5 555V758M110.5 555V758M150.5 555V758M190.5 555V758M230.5 555V758M30 758.5H241M30 718.5H241M30 678.5H241M30 638.5H241M30 598.5H241M30 558.5H241" stroke="#D7D7CF" stroke-width="1" fill="none" shape-rendering="crispEdges"/>
<path d="M94 758v-3h1v3zM95 758v-8h1v8zM96 758v-17h1v17zM97 758v-31h1v31zM98 758v-52h1v52zM99 758v-76h1v76zM100 758v-100h1v100zM101 758v-120h1v120zM102 758v-137h1v137zM103 758v-133h1v133zM104 758v-113h1v113zM105 758v-99h1v99zM106 758v-88h1v88zM107 758v-75h1v75zM108 758v-62h1v62zM109 758v-49h1v49zM110 758v-39h1v39zM111 758v-29h1v29zM112 758v-19h1v19zM113 758v-11h1v11zM114 758v-6h1v6zM115 758v-4h1v4zM115 758v-6h1v6zM116 758v-3h1v3z" fill="#8E8E8E" shape-rendering="crispEdges"/>
<path d="M93 758v-2h1v2zM94 758v-7h1v7zM95 758v-16h1v16zM96 758v-30h1v30zM97 758v-52h1v52zM98 758v-76h1v76zM99 758v-100h1v100zM100 758v-121h1v121zM101 758v-138h1v138zM102 758v-134h1v134zM103 758v-114h1v114zM104 758v-99h1v99zM105 758v-88h1v88zM106 758v-75h1v75zM107 758v-62h1v62zM108 758v-48h1v48zM109 758v-38h1v38zM110 758v-28h1v28zM111 758v-18h1v18zM112 758v-10h1v10zM113 758v-5h1v5zM114 758v-3h1v3z" fill="#008080" shape-rendering="crispEdges"/>
<path d="M30 758.5H241" stroke="#9A9A9A" fill="none" shape-rendering="crispEdges"/>
<path d="M30.5 755V760M57.5 755V760M83.5 755V760M110.5 755V760M136.5 755V760M163.5 755V760M189.5 755V760M216.5 755V760" stroke="#12337A" fill="none" shape-rendering="crispEdges"/>
<text x="30.0" y="772.5" font-family="'Liberation Serif',serif" font-size="13" font-weight="normal" fill="#12337A" text-anchor="middle" letter-spacing="-0.3">0.0</text>
<text x="83.1" y="772.5" font-family="'Liberation Serif',serif" font-size="13" font-weight="normal" fill="#12337A" text-anchor="middle" letter-spacing="-0.3">0.5</text>
<text x="136.2" y="772.5" font-family="'Liberation Serif',serif" font-size="13" font-weight="normal" fill="#12337A" text-anchor="middle" letter-spacing="-0.3">1.0</text>
<text x="189.3" y="772.5" font-family="'Liberation Serif',serif" font-size="13" font-weight="normal" fill="#12337A" text-anchor="middle" letter-spacing="-0.3">1.5</text>
<path d="M80.5 758.5L86.5 758.5L86.5 757.5L91.5 757.5L91.5 723.5L96.5 723.5L96.5 619.5L102.5 619.5L102.5 674.5L107.5 674.5L107.5 741.5L112.5 741.5L112.5 757.5L117.5 757.5L117.5 758.5" fill="none" stroke="#0A0AE0" stroke-width="1.2" shape-rendering="crispEdges"/>
<text x="25" y="600.5" font-family="'Liberation Serif',serif" font-size="13" font-weight="normal" fill="#12337A" text-anchor="end" letter-spacing="-0.4">50</text>
<path d="M26 596.5H33" stroke="#12337A" shape-rendering="crispEdges"/>
<text x="33.5" y="600.5" font-family="'Liberation Serif',serif" font-size="13" font-weight="normal" fill="#1010F0" text-anchor="start" letter-spacing="-0.4">250</text>
<text x="25" y="633.2" font-family="'Liberation Serif',serif" font-size="13" font-weight="normal" fill="#12337A" text-anchor="end" letter-spacing="-0.4">40</text>
<path d="M26 629.5H33" stroke="#12337A" shape-rendering="crispEdges"/>
<text x="33.5" y="633.2" font-family="'Liberation Serif',serif" font-size="13" font-weight="normal" fill="#1010F0" text-anchor="start" letter-spacing="-0.4">200</text>
<text x="25" y="665.9" font-family="'Liberation Serif',serif" font-size="13" font-weight="normal" fill="#12337A" text-anchor="end" letter-spacing="-0.4">30</text>
<path d="M26 662.5H33" stroke="#12337A" shape-rendering="crispEdges"/>
<text x="33.5" y="665.9" font-family="'Liberation Serif',serif" font-size="13" font-weight="normal" fill="#1010F0" text-anchor="start" letter-spacing="-0.4">150</text>
<text x="25" y="698.6" font-family="'Liberation Serif',serif" font-size="13" font-weight="normal" fill="#12337A" text-anchor="end" letter-spacing="-0.4">20</text>
<path d="M26 695.5H33" stroke="#12337A" shape-rendering="crispEdges"/>
<text x="33.5" y="698.6" font-family="'Liberation Serif',serif" font-size="13" font-weight="normal" fill="#1010F0" text-anchor="start" letter-spacing="-0.4">100</text>
<text x="25" y="731.3" font-family="'Liberation Serif',serif" font-size="13" font-weight="normal" fill="#12337A" text-anchor="end" letter-spacing="-0.4">10</text>
<path d="M26 727.5H33" stroke="#12337A" shape-rendering="crispEdges"/>
<text x="33.5" y="731.3" font-family="'Liberation Serif',serif" font-size="13" font-weight="normal" fill="#1010F0" text-anchor="start" letter-spacing="-0.4">50</text>
<text x="20" y="558" font-family="'Liberation Serif',serif" font-size="12" font-weight="bold" fill="#12337A" text-anchor="start" >N</text>
<text x="241" y="772" font-family="'Liberation Serif',serif" font-size="12" font-weight="bold" fill="#12337A" text-anchor="end" >сек</text>
<path d="M550.5 558V758M558.5 558V758M566.5 558V758M574.5 558V758M590.5 558V758M598.5 558V758M606.5 558V758M614.5 558V758M630.5 558V758M638.5 558V758M646.5 558V758M654.5 558V758M670.5 558V758M678.5 558V758M686.5 558V758M694.5 558V758M710.5 558V758M718.5 558V758M726.5 558V758M734.5 558V758M750.5 558V758M542 750.5H753M542 742.5H753M542 734.5H753M542 726.5H753M542 710.5H753M542 702.5H753M542 694.5H753M542 686.5H753M542 670.5H753M542 662.5H753M542 654.5H753M542 646.5H753M542 630.5H753M542 622.5H753M542 614.5H753M542 606.5H753M542 590.5H753M542 582.5H753M542 574.5H753M542 566.5H753" stroke="#F7F7EC" stroke-width="1" fill="none" shape-rendering="crispEdges"/>
<path d="M542.5 555V758M582.5 555V758M622.5 555V758M662.5 555V758M702.5 555V758M742.5 555V758M542 758.5H753M542 718.5H753M542 678.5H753M542 638.5H753M542 598.5H753M542 558.5H753" stroke="#D7D7CF" stroke-width="1" fill="none" shape-rendering="crispEdges"/>
<path d="M597 758v-6h1v6zM598 758v-21h1v21zM599 758v-30h1v30zM600 758v-49h1v49zM601 758v-65h1v65zM602 758v-68h1v68zM603 758v-78h1v78zM604 758v-74h1v74zM605 758v-71h1v71zM606 758v-61h1v61zM607 758v-45h1v45zM608 758v-41h1v41zM609 758v-40h1v40zM610 758v-37h1v37zM611 758v-32h1v32zM612 758v-29h1v29zM613 758v-23h1v23zM614 758v-15h1v15zM615 758v-11h1v11zM616 758v-24h1v24zM617 758v-11h1v11zM618 758v-15h1v15zM619 758v-17h1v17zM620 758v-7h1v7zM621 758v-20h1v20zM622 758v-18h1v18zM623 758v-21h1v21zM624 758v-21h1v21zM625 758v-16h1v16zM626 758v-24h1v24zM627 758v-18h1v18zM628 758v-20h1v20zM629 758v-27h1v27zM630 758v-23h1v23zM631 758v-28h1v28zM632 758v-30h1v30zM633 758v-19h1v19zM634 758v-22h1v22zM635 758v-32h1v32zM636 758v-21h1v21zM637 758v-24h1v24zM638 758v-30h1v30zM639 758v-18h1v18zM640 758v-24h1v24zM641 758v-8h1v8zM642 758v-10h1v10zM643 758v-3h1v3zM644 758v-3h1v3z" fill="#8E8E8E" shape-rendering="crispEdges"/>
<path d="M597 758v-3h1v3zM598 758v-12h1v12zM599 758v-25h1v25zM600 758v-40h1v40zM601 758v-52h1v52zM602 758v-60h1v60zM603 758v-61h1v61zM604 758v-62h1v62zM605 758v-60h1v60zM606 758v-48h1v48zM607 758v-38h1v38zM608 758v-34h1v34zM609 758v-30h1v30zM610 758v-26h1v26zM611 758v-22h1v22zM612 758v-20h1v20zM613 758v-16h1v16zM614 758v-12h1v12zM615 758v-9h1v9zM616 758v-16h1v16zM617 758v-11h1v11zM618 758v-14h1v14zM619 758v-8h1v8zM620 758v-7h1v7zM621 758v-16h1v16zM622 758v-12h1v12zM623 758v-15h1v15zM624 758v-12h1v12zM625 758v-14h1v14zM626 758v-23h1v23zM627 758v-11h1v11zM628 758v-14h1v14zM629 758v-23h1v23zM630 758v-17h1v17zM631 758v-20h1v20zM632 758v-21h1v21zM633 758v-14h1v14zM634 758v-22h1v22zM635 758v-23h1v23zM636 758v-19h1v19zM637 758v-19h1v19zM638 758v-21h1v21zM639 758v-15h1v15zM640 758v-15h1v15zM641 758v-7h1v7zM642 758v-3h1v3zM643 758v-2h1v2zM644 758v-1h1v1z" fill="#008080" shape-rendering="crispEdges"/>
<path d="M542 758.5H753" stroke="#9A9A9A" fill="none" shape-rendering="crispEdges"/>
<path d="M542.5 755V760M569.5 755V760M595.5 755V760M622.5 755V760M648.5 755V760M675.5 755V760M701.5 755V760M728.5 755V760" stroke="#12337A" fill="none" shape-rendering="crispEdges"/>
<text x="542.0" y="772.5" font-family="'Liberation Serif',serif" font-size="13" font-weight="normal" fill="#12337A" text-anchor="middle" letter-spacing="-0.3">0.0</text>
<text x="595.1" y="772.5" font-family="'Liberation Serif',serif" font-size="13" font-weight="normal" fill="#12337A" text-anchor="middle" letter-spacing="-0.3">0.5</text>
<text x="648.2" y="772.5" font-family="'Liberation Serif',serif" font-size="13" font-weight="normal" fill="#12337A" text-anchor="middle" letter-spacing="-0.3">1.0</text>
<text x="701.3" y="772.5" font-family="'Liberation Serif',serif" font-size="13" font-weight="normal" fill="#12337A" text-anchor="middle" letter-spacing="-0.3">1.5</text>
<path d="M587.5 758.5L593.5 758.5L593.5 748.5L598.5 748.5L598.5 647.5L603.5 647.5L603.5 667.5L609.5 667.5L609.5 709.5L614.5 709.5L614.5 726.5L619.5 726.5L619.5 727.5L625.5 727.5L625.5 715.5L630.5 715.5L630.5 711.5L634.5 711.5L634.5 721.5L640.5 721.5L640.5 754.5L646.5 754.5L646.5 758.5" fill="none" stroke="#0A0AE0" stroke-width="1.2" shape-rendering="crispEdges"/>
<text x="537" y="600.5" font-family="'Liberation Serif',serif" font-size="13" font-weight="normal" fill="#12337A" text-anchor="end" letter-spacing="-0.4">50</text>
<path d="M538 596.5H545" stroke="#12337A" shape-rendering="crispEdges"/>
<text x="545.5" y="600.5" font-family="'Liberation Serif',serif" font-size="13" font-weight="normal" fill="#1010F0" text-anchor="start" letter-spacing="-0.4">150</text>
<text x="537" y="633.2" font-family="'Liberation Serif',serif" font-size="13" font-weight="normal" fill="#12337A" text-anchor="end" letter-spacing="-0.4">40</text>
<path d="M538 629.5H545" stroke="#12337A" shape-rendering="crispEdges"/>
<text x="545.5" y="633.2" font-family="'Liberation Serif',serif" font-size="13" font-weight="normal" fill="#1010F0" text-anchor="start" letter-spacing="-0.4">120</text>
<text x="537" y="665.9" font-family="'Liberation Serif',serif" font-size="13" font-weight="normal" fill="#12337A" text-anchor="end" letter-spacing="-0.4">30</text>
<path d="M538 662.5H545" stroke="#12337A" shape-rendering="crispEdges"/>
<text x="545.5" y="665.9" font-family="'Liberation Serif',serif" font-size="13" font-weight="normal" fill="#1010F0" text-anchor="start" letter-spacing="-0.4">90</text>
<text x="537" y="698.6" font-family="'Liberation Serif',serif" font-size="13" font-weight="normal" fill="#12337A" text-anchor="end" letter-spacing="-0.4">20</text>
<path d="M538 695.5H545" stroke="#12337A" shape-rendering="crispEdges"/>
<text x="545.5" y="698.6" font-family="'Liberation Serif',serif" font-size="13" font-weight="normal" fill="#1010F0" text-anchor="start" letter-spacing="-0.4">60</text>
<text x="537" y="731.3" font-family="'Liberation Serif',serif" font-size="13" font-weight="normal" fill="#12337A" text-anchor="end" letter-spacing="-0.4">10</text>
<path d="M538 727.5H545" stroke="#12337A" shape-rendering="crispEdges"/>
<text x="545.5" y="731.3" font-family="'Liberation Serif',serif" font-size="13" font-weight="normal" fill="#1010F0" text-anchor="start" letter-spacing="-0.4">30</text>
<text x="532" y="558" font-family="'Liberation Serif',serif" font-size="12" font-weight="bold" fill="#12337A" text-anchor="start" >N</text>
<text x="753" y="772" font-family="'Liberation Serif',serif" font-size="12" font-weight="bold" fill="#12337A" text-anchor="end" >сек</text>
<path d="M294.5 558V758M302.5 558V758M310.5 558V758M318.5 558V758M334.5 558V758M342.5 558V758M350.5 558V758M358.5 558V758M374.5 558V758M382.5 558V758M390.5 558V758M398.5 558V758M414.5 558V758M422.5 558V758M430.5 558V758M438.5 558V758M454.5 558V758M462.5 558V758M470.5 558V758M478.5 558V758M494.5 558V758M286 750.5H498M286 742.5H498M286 734.5H498M286 726.5H498M286 710.5H498M286 702.5H498M286 694.5H498M286 686.5H498M286 670.5H498M286 662.5H498M286 654.5H498M286 646.5H498M286 630.5H498M286 622.5H498M286 614.5H498M286 606.5H498M286 590.5H498M286 582.5H498M286 574.5H498M286 566.5H498" stroke="#F7F7EC" stroke-width="1" fill="none" shape-rendering="crispEdges"/>
<path d="M286.5 555V758M326.5 555V758M366.5 555V758M406.5 555V758M446.5 555V758M486.5 555V758M286 758.5H498M286 718.5H498M286 678.5H498M286 638.5H498M286 598.5H498M286 558.5H498" stroke="#D7D7CF" stroke-width="1" fill="none" shape-rendering="crispEdges"/>
<path d="M289 754h1v1h-1zM292 751h1v1h-1zM295 748h1v1h-1zM298 746h1v1h-1zM301 743h1v1h-1zM304 740h1v1h-1zM307 737h1v1h-1zM310 734h1v1h-1zM313 731h1v1h-1zM316 728h1v1h-1zM319 725h1v1h-1zM322 723h1v1h-1zM325 720h1v1h-1zM328 717h1v1h-1zM331 714h1v1h-1zM334 711h1v1h-1zM337 708h1v1h-1zM340 705h1v1h-1zM343 702h1v1h-1zM346 700h1v1h-1zM349 697h1v1h-1zM352 694h1v1h-1zM355 691h1v1h-1zM358 688h1v1h-1zM361 685h1v1h-1zM364 682h1v1h-1zM367 679h1v1h-1zM370 677h1v1h-1zM373 674h1v1h-1zM376 671h1v1h-1zM379 668h1v1h-1zM382 665h1v1h-1zM385 662h1v1h-1zM388 659h1v1h-1zM391 657h1v1h-1zM394 654h1v1h-1zM397 651h1v1h-1zM400 648h1v1h-1zM403 645h1v1h-1zM406 642h1v1h-1zM409 639h1v1h-1zM412 636h1v1h-1zM415 634h1v1h-1zM418 631h1v1h-1zM421 628h1v1h-1zM424 625h1v1h-1zM427 622h1v1h-1zM430 619h1v1h-1zM433 616h1v1h-1zM436 613h1v1h-1zM439 611h1v1h-1zM442 608h1v1h-1zM445 605h1v1h-1zM448 602h1v1h-1zM451 599h1v1h-1zM454 596h1v1h-1zM457 593h1v1h-1zM460 590h1v1h-1zM463 588h1v1h-1zM466 585h1v1h-1zM469 582h1v1h-1zM472 579h1v1h-1zM475 576h1v1h-1zM478 573h1v1h-1zM481 570h1v1h-1zM484 568h1v1h-1zM487 565h1v1h-1zM490 562h1v1h-1zM493 559h1v1h-1zM496 556h1v1h-1zM499 553h1v1h-1z" fill="#1E1E3C" shape-rendering="crispEdges"/>
<ellipse cx="366.8" cy="681.5" rx="15" ry="3.2" transform="rotate(-43.5 366.8 681.5)" fill="#78B8A0"/><ellipse cx="366.8" cy="681.5" rx="9" ry="1.800" transform="rotate(-43.5 366.8 681.5)" fill="#409888"/><rect x="360" y="688" width="1.2" height="1.7" fill="#90C8A8"/><rect x="357" y="692" width="1.2" height="1.7" fill="#A8D8B0"/><rect x="371" y="680" width="1.2" height="1.7" fill="#A8D8B0"/><rect x="372" y="677" width="1.2" height="1.7" fill="#A8D8B0"/><rect x="354" y="691" width="1.2" height="1.7" fill="#A8D8B0"/><rect x="361" y="684" width="1.2" height="1.7" fill="#90C8A8"/><rect x="361" y="683" width="1.2" height="1.7" fill="#A8D8B0"/><rect x="357" y="686" width="1.2" height="1.7" fill="#A8D8B0"/><rect x="371" y="678" width="1.2" height="1.7" fill="#A8D8B0"/><rect x="357" y="687" width="1.2" height="1.7" fill="#90C8A8"/><rect x="358" y="691" width="1.2" height="1.7" fill="#A8D8B0"/><rect x="361" y="683" width="1.2" height="1.7" fill="#A8D8B0"/><rect x="363" y="685" width="1.2" height="1.7" fill="#A8D8B0"/><rect x="364" y="680" width="1.2" height="1.7" fill="#A8D8B0"/><rect x="365" y="682" width="1.2" height="1.7" fill="#A8D8B0"/><rect x="359" y="691" width="1.2" height="1.7" fill="#90C8A8"/><rect x="368" y="680" width="1.2" height="1.7" fill="#A8D8B0"/><rect x="373" y="681" width="1.2" height="1.7" fill="#A8D8B0"/><rect x="365" y="683" width="1.2" height="1.7" fill="#A8D8B0"/><rect x="366" y="678" width="1.2" height="1.7" fill="#A8D8B0"/><rect x="367" y="681" width="1.2" height="1.7" fill="#90C8A8"/><rect x="366" y="680" width="1.2" height="1.7" fill="#A8D8B0"/><rect x="366" y="680" width="1.2" height="1.7" fill="#90C8A8"/><rect x="367" y="679" width="1.2" height="1.7" fill="#A8D8B0"/><rect x="364" y="684" width="1.2" height="1.7" fill="#A8D8B0"/><rect x="363" y="686" width="1.2" height="1.7" fill="#90C8A8"/><rect x="364" y="684" width="1.2" height="1.7" fill="#90C8A8"/><rect x="371" y="677" width="1.2" height="1.7" fill="#A8D8B0"/><rect x="370" y="678" width="1.2" height="1.7" fill="#90C8A8"/><rect x="369" y="684" width="1.2" height="1.7" fill="#90C8A8"/><rect x="368" y="676" width="1.2" height="1.7" fill="#A8D8B0"/><rect x="374" y="676" width="1.2" height="1.7" fill="#A8D8B0"/><rect x="372" y="675" width="1.2" height="1.7" fill="#90C8A8"/><rect x="374" y="677" width="1.2" height="1.7" fill="#A8D8B0"/><rect x="369" y="677" width="1.2" height="1.7" fill="#A8D8B0"/><rect x="366" y="683" width="1.2" height="1.7" fill="#A8D8B0"/><rect x="365" y="680" width="1.2" height="1.7" fill="#A8D8B0"/><rect x="363" y="681" width="1.2" height="1.7" fill="#90C8A8"/><rect x="361" y="684" width="1.2" height="1.7" fill="#A8D8B0"/><rect x="373" y="677" width="1.2" height="1.7" fill="#90C8A8"/><rect x="370" y="682" width="1.2" height="1.7" fill="#90C8A8"/><rect x="357" y="693" width="1.2" height="1.7" fill="#90C8A8"/><rect x="367" y="682" width="1.2" height="1.7" fill="#A8D8B0"/><rect x="373" y="677" width="1.2" height="1.7" fill="#A8D8B0"/><rect x="368" y="686" width="1.2" height="1.7" fill="#A8D8B0"/><rect x="366" y="680" width="1.2" height="1.7" fill="#90C8A8"/><rect x="365" y="683" width="1.2" height="1.7" fill="#A8D8B0"/><rect x="367" y="684" width="1.2" height="1.7" fill="#A8D8B0"/><rect x="370" y="678" width="1.2" height="1.7" fill="#90C8A8"/><rect x="375" y="672" width="1.2" height="1.7" fill="#A8D8B0"/><rect x="354" y="689" width="1.2" height="1.7" fill="#90C8A8"/><rect x="373" y="672" width="1.2" height="1.7" fill="#A8D8B0"/><rect x="375" y="673" width="1.2" height="1.7" fill="#90C8A8"/><rect x="372" y="677" width="1.2" height="1.7" fill="#A8D8B0"/><rect x="369" y="678" width="1.2" height="1.7" fill="#90C8A8"/><rect x="363" y="678" width="1.2" height="1.7" fill="#A8D8B0"/><rect x="367" y="674" width="1.2" height="1.7" fill="#90C8A8"/>
<ellipse cx="366.8" cy="681.5" rx="19.5" ry="5.0" transform="rotate(-43.5 366.8 681.5)" fill="none" stroke="#E81010" stroke-width="1.3"/>
<text x="280" y="763.0" font-family="'Liberation Serif',serif" font-size="13" font-weight="normal" fill="#12337A" text-anchor="end" letter-spacing="-0.3">0.0</text>
<text x="280" y="707.0" font-family="'Liberation Serif',serif" font-size="13" font-weight="normal" fill="#12337A" text-anchor="end" letter-spacing="-0.3">0.5</text>
<text x="345.5" y="772.5" font-family="'Liberation Serif',serif" font-size="13" font-weight="normal" fill="#12337A" text-anchor="middle" letter-spacing="-0.3">0.5</text>
<text x="280" y="651.0" font-family="'Liberation Serif',serif" font-size="13" font-weight="normal" fill="#12337A" text-anchor="end" letter-spacing="-0.3">1.0</text>
<text x="404.5" y="772.5" font-family="'Liberation Serif',serif" font-size="13" font-weight="normal" fill="#12337A" text-anchor="middle" letter-spacing="-0.3">1.0</text>
<text x="280" y="594.0" font-family="'Liberation Serif',serif" font-size="13" font-weight="normal" fill="#12337A" text-anchor="end" letter-spacing="-0.3">1.5</text>
<text x="463.5" y="772.5" font-family="'Liberation Serif',serif" font-size="13" font-weight="normal" fill="#12337A" text-anchor="middle" letter-spacing="-0.3">1.5</text>
<path d="M283 758.5H287M283 702.5H287M345.5 759V762M283 646.5H287M404.5 759V762M283 589.5H287M463.5 759V762M286.5 758V762" stroke="#12337A" fill="none" shape-rendering="crispEdges"/>
<text x="261" y="557" font-family="'Liberation Serif',serif" font-size="12" font-weight="bold" fill="#12337A" text-anchor="start" >RRi-1, c</text>
<text x="505" y="772" font-family="'Liberation Serif',serif" font-size="12" font-weight="bold" fill="#12337A" text-anchor="end" >RRi, c</text>
<path d="M806.5 558V758M814.5 558V758M822.5 558V758M830.5 558V758M846.5 558V758M854.5 558V758M862.5 558V758M870.5 558V758M886.5 558V758M894.5 558V758M902.5 558V758M910.5 558V758M926.5 558V758M934.5 558V758M942.5 558V758M950.5 558V758M966.5 558V758M974.5 558V758M982.5 558V758M990.5 558V758M1006.5 558V758M798 750.5H1010M798 742.5H1010M798 734.5H1010M798 726.5H1010M798 710.5H1010M798 702.5H1010M798 694.5H1010M798 686.5H1010M798 670.5H1010M798 662.5H1010M798 654.5H1010M798 646.5H1010M798 630.5H1010M798 622.5H1010M798 614.5H1010M798 606.5H1010M798 590.5H1010M798 582.5H1010M798 574.5H1010M798 566.5H1010" stroke="#F7F7EC" stroke-width="1" fill="none" shape-rendering="crispEdges"/>
<path d="M798.5 555V758M838.5 555V758M878.5 555V758M918.5 555V758M958.5 555V758M998.5 555V758M798 758.5H1010M798 718.5H1010M798 678.5H1010M798 638.5H1010M798 598.5H1010M798 558.5H1010" stroke="#D7D7CF" stroke-width="1" fill="none" shape-rendering="crispEdges"/>
<path d="M801 754h1v1h-1zM804 751h1v1h-1zM807 748h1v1h-1zM810 746h1v1h-1zM813 743h1v1h-1zM816 740h1v1h-1zM819 737h1v1h-1zM822 734h1v1h-1zM825 731h1v1h-1zM828 728h1v1h-1zM831 725h1v1h-1zM834 723h1v1h-1zM837 720h1v1h-1zM840 717h1v1h-1zM843 714h1v1h-1zM846 711h1v1h-1zM849 708h1v1h-1zM852 705h1v1h-1zM855 702h1v1h-1zM858 700h1v1h-1zM861 697h1v1h-1zM864 694h1v1h-1zM867 691h1v1h-1zM870 688h1v1h-1zM873 685h1v1h-1zM876 682h1v1h-1zM879 679h1v1h-1zM882 677h1v1h-1zM885 674h1v1h-1zM888 671h1v1h-1zM891 668h1v1h-1zM894 665h1v1h-1zM897 662h1v1h-1zM900 659h1v1h-1zM903 657h1v1h-1zM906 654h1v1h-1zM909 651h1v1h-1zM912 648h1v1h-1zM915 645h1v1h-1zM918 642h1v1h-1zM921 639h1v1h-1zM924 636h1v1h-1zM927 634h1v1h-1zM930 631h1v1h-1zM933 628h1v1h-1zM936 625h1v1h-1zM939 622h1v1h-1zM942 619h1v1h-1zM945 616h1v1h-1zM948 613h1v1h-1zM951 611h1v1h-1zM954 608h1v1h-1zM957 605h1v1h-1zM960 602h1v1h-1zM963 599h1v1h-1zM966 596h1v1h-1zM969 593h1v1h-1zM972 590h1v1h-1zM975 588h1v1h-1zM978 585h1v1h-1zM981 582h1v1h-1zM984 579h1v1h-1zM987 576h1v1h-1zM990 573h1v1h-1zM993 570h1v1h-1zM996 568h1v1h-1zM999 565h1v1h-1zM1002 562h1v1h-1zM1005 559h1v1h-1zM1008 556h1v1h-1zM1011 553h1v1h-1z" fill="#1E1E3C" shape-rendering="crispEdges"/>
<rect x="901" y="664" width="1.3" height="1.8" fill="#A8D8A0"/><rect x="894" y="664" width="1.3" height="1.8" fill="#A8D8A0"/><rect x="895" y="661" width="1.3" height="1.8" fill="#98CC98"/><rect x="877" y="679" width="1.3" height="1.8" fill="#A8D8A0"/><rect x="881" y="678" width="1.3" height="1.8" fill="#98CC98"/><rect x="895" y="669" width="1.3" height="1.8" fill="#B8E0B0"/><rect x="882" y="674" width="1.3" height="1.8" fill="#98CC98"/><rect x="878" y="677" width="1.3" height="1.8" fill="#B8E0B0"/><rect x="888" y="671" width="1.3" height="1.8" fill="#98CC98"/><rect x="905" y="658" width="1.3" height="1.8" fill="#B8E0B0"/><rect x="907" y="661" width="1.3" height="1.8" fill="#98CC98"/><rect x="894" y="665" width="1.3" height="1.8" fill="#A8D8A0"/><rect x="882" y="680" width="1.3" height="1.8" fill="#98CC98"/><rect x="890" y="674" width="1.3" height="1.8" fill="#B8E0B0"/><rect x="876" y="679" width="1.3" height="1.8" fill="#A8D8A0"/><rect x="880" y="687" width="1.3" height="1.8" fill="#A8D8A0"/><rect x="866" y="686" width="1.3" height="1.8" fill="#A8D8A0"/><rect x="894" y="664" width="1.3" height="1.8" fill="#98CC98"/><rect x="893" y="666" width="1.3" height="1.8" fill="#A8D8A0"/><rect x="860" y="698" width="1.3" height="1.8" fill="#A8D8A0"/><rect x="886" y="677" width="1.3" height="1.8" fill="#B8E0B0"/><rect x="890" y="666" width="1.3" height="1.8" fill="#98CC98"/><rect x="874" y="685" width="1.3" height="1.8" fill="#98CC98"/><rect x="881" y="680" width="1.3" height="1.8" fill="#A8D8A0"/><rect x="886" y="681" width="1.3" height="1.8" fill="#98CC98"/><rect x="878" y="675" width="1.3" height="1.8" fill="#B8E0B0"/><rect x="873" y="681" width="1.3" height="1.8" fill="#98CC98"/><rect x="898" y="668" width="1.3" height="1.8" fill="#A8D8A0"/><rect x="885" y="671" width="1.3" height="1.8" fill="#A8D8A0"/><rect x="892" y="671" width="1.3" height="1.8" fill="#98CC98"/><rect x="868" y="683" width="1.3" height="1.8" fill="#A8D8A0"/><rect x="881" y="676" width="1.3" height="1.8" fill="#B8E0B0"/><rect x="889" y="679" width="1.3" height="1.8" fill="#B8E0B0"/><rect x="882" y="678" width="1.3" height="1.8" fill="#A8D8A0"/><rect x="886" y="679" width="1.3" height="1.8" fill="#98CC98"/><rect x="900" y="660" width="1.3" height="1.8" fill="#A8D8A0"/><rect x="870" y="695" width="1.3" height="1.8" fill="#A8D8A0"/><rect x="883" y="674" width="1.3" height="1.8" fill="#B8E0B0"/><rect x="900" y="671" width="1.3" height="1.8" fill="#A8D8A0"/><rect x="876" y="689" width="1.3" height="1.8" fill="#98CC98"/><rect x="868" y="693" width="1.3" height="1.8" fill="#A8D8A0"/><rect x="911" y="657" width="1.3" height="1.8" fill="#98CC98"/><rect x="892" y="668" width="1.3" height="1.8" fill="#A8D8A0"/><rect x="902" y="659" width="1.3" height="1.8" fill="#B8E0B0"/><rect x="888" y="680" width="1.3" height="1.8" fill="#A8D8A0"/><rect x="884" y="678" width="1.3" height="1.8" fill="#B8E0B0"/><rect x="880" y="684" width="1.3" height="1.8" fill="#B8E0B0"/><rect x="883" y="678" width="1.3" height="1.8" fill="#A8D8A0"/><rect x="883" y="678" width="1.3" height="1.8" fill="#98CC98"/><rect x="878" y="690" width="1.3" height="1.8" fill="#A8D8A0"/><rect x="898" y="660" width="1.3" height="1.8" fill="#98CC98"/><rect x="895" y="668" width="1.3" height="1.8" fill="#98CC98"/><rect x="860" y="695" width="1.3" height="1.8" fill="#98CC98"/><rect x="873" y="682" width="1.3" height="1.8" fill="#98CC98"/><rect x="889" y="679" width="1.3" height="1.8" fill="#98CC98"/><rect x="897" y="673" width="1.3" height="1.8" fill="#98CC98"/><rect x="868" y="690" width="1.3" height="1.8" fill="#A8D8A0"/><rect x="881" y="680" width="1.3" height="1.8" fill="#A8D8A0"/><rect x="883" y="676" width="1.3" height="1.8" fill="#A8D8A0"/><rect x="872" y="687" width="1.3" height="1.8" fill="#98CC98"/><rect x="891" y="671" width="1.3" height="1.8" fill="#A8D8A0"/><rect x="903" y="662" width="1.3" height="1.8" fill="#B8E0B0"/><rect x="905" y="652" width="1.3" height="1.8" fill="#B8E0B0"/><rect x="887" y="679" width="1.3" height="1.8" fill="#A8D8A0"/><rect x="875" y="694" width="1.3" height="1.8" fill="#B8E0B0"/><rect x="879" y="680" width="1.3" height="1.8" fill="#B8E0B0"/><rect x="859" y="691" width="1.3" height="1.8" fill="#A8D8A0"/><rect x="894" y="668" width="1.3" height="1.8" fill="#A8D8A0"/><rect x="879" y="677" width="1.3" height="1.8" fill="#B8E0B0"/><rect x="889" y="677" width="1.3" height="1.8" fill="#B8E0B0"/><rect x="884" y="674" width="1.3" height="1.8" fill="#98CC98"/><rect x="868" y="686" width="1.3" height="1.8" fill="#98CC98"/><rect x="871" y="687" width="1.3" height="1.8" fill="#B8E0B0"/><rect x="866" y="687" width="1.3" height="1.8" fill="#98CC98"/><rect x="892" y="671" width="1.3" height="1.8" fill="#98CC98"/><rect x="876" y="683" width="1.3" height="1.8" fill="#A8D8A0"/><rect x="894" y="661" width="1.3" height="1.8" fill="#A8D8A0"/><rect x="892" y="677" width="1.3" height="1.8" fill="#B8E0B0"/><rect x="894" y="664" width="1.3" height="1.8" fill="#B8E0B0"/><rect x="892" y="667" width="1.3" height="1.8" fill="#A8D8A0"/><rect x="891" y="668" width="1.3" height="1.8" fill="#A8D8A0"/><rect x="891" y="672" width="1.3" height="1.8" fill="#B8E0B0"/><rect x="910" y="658" width="1.3" height="1.8" fill="#B8E0B0"/><rect x="865" y="692" width="1.3" height="1.8" fill="#A8D8A0"/><rect x="871" y="692" width="1.3" height="1.8" fill="#A8D8A0"/><rect x="902" y="663" width="1.3" height="1.8" fill="#B8E0B0"/><rect x="900" y="665" width="1.3" height="1.8" fill="#B8E0B0"/><rect x="865" y="693" width="1.3" height="1.8" fill="#A8D8A0"/><rect x="888" y="667" width="1.3" height="1.8" fill="#A8D8A0"/><rect x="903" y="660" width="1.3" height="1.8" fill="#98CC98"/><rect x="897" y="661" width="1.3" height="1.8" fill="#A8D8A0"/><rect x="891" y="673" width="1.3" height="1.8" fill="#A8D8A0"/><rect x="891" y="671" width="1.3" height="1.8" fill="#98CC98"/><rect x="865" y="696" width="1.3" height="1.8" fill="#B8E0B0"/><rect x="877" y="686" width="1.3" height="1.8" fill="#B8E0B0"/><rect x="871" y="691" width="1.3" height="1.8" fill="#A8D8A0"/><rect x="883" y="676" width="1.3" height="1.8" fill="#A8D8A0"/><rect x="895" y="671" width="1.3" height="1.8" fill="#98CC98"/><rect x="869" y="698" width="1.3" height="1.8" fill="#98CC98"/><rect x="897" y="670" width="1.3" height="1.8" fill="#A8D8A0"/><rect x="884" y="678" width="1.3" height="1.8" fill="#98CC98"/><rect x="903" y="651" width="1.3" height="1.8" fill="#B8E0B0"/><rect x="877" y="681" width="1.3" height="1.8" fill="#98CC98"/><rect x="910" y="651" width="1.3" height="1.8" fill="#B8E0B0"/><rect x="886" y="677" width="1.3" height="1.8" fill="#98CC98"/><rect x="886" y="666" width="1.3" height="1.8" fill="#B8E0B0"/><rect x="896" y="669" width="1.3" height="1.8" fill="#98CC98"/><rect x="874" y="678" width="1.3" height="1.8" fill="#A8D8A0"/><rect x="870" y="694" width="1.3" height="1.8" fill="#A8D8A0"/><rect x="887" y="669" width="1.3" height="1.8" fill="#A8D8A0"/><rect x="899" y="663" width="1.3" height="1.8" fill="#98CC98"/><rect x="889" y="671" width="1.3" height="1.8" fill="#B8E0B0"/><rect x="904" y="656" width="1.3" height="1.8" fill="#B8E0B0"/><rect x="891" y="674" width="1.3" height="1.8" fill="#A8D8A0"/><rect x="872" y="686" width="1.3" height="1.8" fill="#B8E0B0"/><rect x="870" y="683" width="1.3" height="1.8" fill="#B8E0B0"/><rect x="889" y="672" width="1.3" height="1.8" fill="#98CC98"/><rect x="895" y="669" width="1.3" height="1.8" fill="#B8E0B0"/><rect x="883" y="678" width="1.3" height="1.8" fill="#A8D8A0"/><rect x="885" y="675" width="1.3" height="1.8" fill="#B8E0B0"/><rect x="891" y="680" width="1.3" height="1.8" fill="#98CC98"/><rect x="872" y="686" width="1.3" height="1.8" fill="#98CC98"/><rect x="867" y="686" width="1.3" height="1.8" fill="#A8D8A0"/><rect x="866" y="691" width="1.3" height="1.8" fill="#A8D8A0"/><rect x="894" y="662" width="1.3" height="1.8" fill="#98CC98"/><rect x="873" y="690" width="1.3" height="1.8" fill="#98CC98"/><rect x="882" y="683" width="1.3" height="1.8" fill="#B8E0B0"/><rect x="874" y="681" width="1.3" height="1.8" fill="#B8E0B0"/><rect x="871" y="681" width="1.3" height="1.8" fill="#A8D8A0"/><rect x="896" y="665" width="1.3" height="1.8" fill="#A8D8A0"/><rect x="875" y="681" width="1.3" height="1.8" fill="#98CC98"/><rect x="867" y="699" width="1.3" height="1.8" fill="#98CC98"/><rect x="874" y="690" width="1.3" height="1.8" fill="#98CC98"/><rect x="891" y="670" width="1.3" height="1.8" fill="#A8D8A0"/><rect x="873" y="689" width="1.3" height="1.8" fill="#A8D8A0"/><rect x="892" y="669" width="1.3" height="1.8" fill="#98CC98"/><rect x="892" y="668" width="1.3" height="1.8" fill="#A8D8A0"/><rect x="880" y="679" width="1.3" height="1.8" fill="#98CC98"/><rect x="881" y="681" width="1.3" height="1.8" fill="#A8D8A0"/><rect x="882" y="680" width="1.3" height="1.8" fill="#B8E0B0"/><rect x="868" y="693" width="1.3" height="1.8" fill="#B8E0B0"/><rect x="868" y="687" width="1.3" height="1.8" fill="#98CC98"/><rect x="867" y="696" width="1.3" height="1.8" fill="#98CC98"/><rect x="888" y="670" width="1.3" height="1.8" fill="#B8E0B0"/><rect x="883" y="673" width="1.3" height="1.8" fill="#A8D8A0"/><rect x="874" y="685" width="1.3" height="1.8" fill="#98CC98"/><rect x="875" y="681" width="1.3" height="1.8" fill="#B8E0B0"/><rect x="867" y="687" width="1.3" height="1.8" fill="#98CC98"/><rect x="868" y="687" width="1.3" height="1.8" fill="#A8D8A0"/><rect x="892" y="673" width="1.3" height="1.8" fill="#98CC98"/><rect x="908" y="650" width="1.3" height="1.8" fill="#A8D8A0"/><rect x="884" y="675" width="1.3" height="1.8" fill="#B8E0B0"/><rect x="871" y="692" width="1.3" height="1.8" fill="#A8D8A0"/><rect x="890" y="675" width="1.3" height="1.8" fill="#A8D8A0"/><rect x="892" y="667" width="1.3" height="1.8" fill="#A8D8A0"/><rect x="875" y="681" width="1.3" height="1.8" fill="#B8E0B0"/><rect x="880" y="683" width="1.3" height="1.8" fill="#B8E0B0"/><rect x="880" y="670" width="1.3" height="1.8" fill="#A8D8A0"/><rect x="888" y="667" width="1.3" height="1.8" fill="#98CC98"/><rect x="895" y="659" width="1.3" height="1.8" fill="#B8E0B0"/><rect x="878" y="684" width="1.3" height="1.8" fill="#A8D8A0"/><rect x="875" y="690" width="1.3" height="1.8" fill="#98CC98"/><rect x="881" y="685" width="1.3" height="1.8" fill="#98CC98"/><rect x="889" y="669" width="1.3" height="1.8" fill="#98CC98"/><rect x="883" y="679" width="1.3" height="1.8" fill="#B8E0B0"/><rect x="891" y="670" width="1.3" height="1.8" fill="#98CC98"/><rect x="861" y="693" width="1.3" height="1.8" fill="#B8E0B0"/><rect x="883" y="685" width="1.3" height="1.8" fill="#A8D8A0"/><rect x="880" y="690" width="1.3" height="1.8" fill="#98CC98"/><rect x="897" y="666" width="1.3" height="1.8" fill="#98CC98"/><rect x="885" y="671" width="1.3" height="1.8" fill="#A8D8A0"/><rect x="893" y="675" width="1.3" height="1.8" fill="#B8E0B0"/><rect x="882" y="680" width="1.3" height="1.8" fill="#98CC98"/><rect x="870" y="691" width="1.3" height="1.8" fill="#98CC98"/><rect x="897" y="662" width="1.3" height="1.8" fill="#B8E0B0"/><rect x="877" y="684" width="1.3" height="1.8" fill="#98CC98"/><rect x="893" y="666" width="1.3" height="1.8" fill="#B8E0B0"/><rect x="887" y="673" width="1.3" height="1.8" fill="#98CC98"/><rect x="877" y="686" width="1.3" height="1.8" fill="#A8D8A0"/><rect x="883" y="673" width="1.3" height="1.8" fill="#B8E0B0"/><rect x="860" y="696" width="1.3" height="1.8" fill="#98CC98"/><rect x="890" y="673" width="1.3" height="1.8" fill="#B8E0B0"/><rect x="893" y="666" width="1.3" height="1.8" fill="#A8D8A0"/><rect x="888" y="675" width="1.3" height="1.8" fill="#A8D8A0"/><rect x="868" y="684" width="1.3" height="1.8" fill="#A8D8A0"/><rect x="875" y="683" width="1.3" height="1.8" fill="#98CC98"/><rect x="891" y="671" width="1.3" height="1.8" fill="#98CC98"/><rect x="897" y="667" width="1.3" height="1.8" fill="#A8D8A0"/><rect x="880" y="678" width="1.3" height="1.8" fill="#98CC98"/><rect x="889" y="667" width="1.3" height="1.8" fill="#98CC98"/><rect x="894" y="675" width="1.3" height="1.8" fill="#98CC98"/><rect x="880" y="684" width="1.3" height="1.8" fill="#B8E0B0"/><rect x="876" y="679" width="1.3" height="1.8" fill="#98CC98"/><rect x="887" y="672" width="1.3" height="1.8" fill="#98CC98"/><rect x="897" y="662" width="1.3" height="1.8" fill="#98CC98"/><rect x="885" y="675" width="1.3" height="1.8" fill="#B8E0B0"/><rect x="896" y="657" width="1.3" height="1.8" fill="#98CC98"/><rect x="873" y="682" width="1.3" height="1.8" fill="#98CC98"/><rect x="893" y="669" width="1.3" height="1.8" fill="#B8E0B0"/><rect x="894" y="665" width="1.3" height="1.8" fill="#A8D8A0"/><rect x="899" y="662" width="1.3" height="1.8" fill="#A8D8A0"/><rect x="882" y="682" width="1.3" height="1.8" fill="#98CC98"/><rect x="898" y="665" width="1.3" height="1.8" fill="#A8D8A0"/><rect x="885" y="678" width="1.3" height="1.8" fill="#A8D8A0"/><rect x="903" y="654" width="1.3" height="1.8" fill="#A8D8A0"/><rect x="858" y="695" width="1.3" height="1.8" fill="#A8D8A0"/><rect x="884" y="679" width="1.3" height="1.8" fill="#B8E0B0"/><rect x="890" y="675" width="1.3" height="1.8" fill="#98CC98"/><rect x="871" y="690" width="1.3" height="1.8" fill="#B8E0B0"/><rect x="892" y="672" width="1.3" height="1.8" fill="#A8D8A0"/><rect x="859" y="696" width="1.3" height="1.8" fill="#B8E0B0"/><rect x="905" y="650" width="1.3" height="1.8" fill="#B8E0B0"/><rect x="870" y="682" width="1.3" height="1.8" fill="#A8D8A0"/><rect x="877" y="684" width="1.3" height="1.8" fill="#A8D8A0"/><rect x="889" y="675" width="1.3" height="1.8" fill="#B8E0B0"/><rect x="909" y="652" width="1.3" height="1.8" fill="#B8E0B0"/><rect x="886" y="673" width="1.3" height="1.8" fill="#A8D8A0"/><rect x="904" y="651" width="1.3" height="1.8" fill="#B8E0B0"/><rect x="877" y="684" width="1.3" height="1.8" fill="#B8E0B0"/><rect x="879" y="679" width="1.3" height="1.8" fill="#A8D8A0"/><rect x="886" y="672" width="1.3" height="1.8" fill="#98CC98"/><rect x="904" y="664" width="1.3" height="1.8" fill="#98CC98"/><rect x="887" y="679" width="1.3" height="1.8" fill="#A8D8A0"/><rect x="878" y="681" width="1.3" height="1.8" fill="#A8D8A0"/><rect x="893" y="659" width="1.3" height="1.8" fill="#A8D8A0"/><rect x="896" y="667" width="1.3" height="1.8" fill="#98CC98"/><rect x="857" y="699" width="1.3" height="1.8" fill="#98CC98"/><rect x="861" y="693" width="1.3" height="1.8" fill="#B8E0B0"/><rect x="895" y="667" width="1.3" height="1.8" fill="#A8D8A0"/><rect x="891" y="669" width="1.3" height="1.8" fill="#B8E0B0"/><rect x="893" y="674" width="1.3" height="1.8" fill="#98CC98"/><rect x="897" y="663" width="1.3" height="1.8" fill="#B8E0B0"/><rect x="897" y="666" width="1.3" height="1.8" fill="#B8E0B0"/><rect x="883" y="676" width="1.3" height="1.8" fill="#A8D8A0"/><rect x="882" y="676" width="1.3" height="1.8" fill="#B8E0B0"/><rect x="872" y="680" width="1.3" height="1.8" fill="#A8D8A0"/><rect x="884" y="675" width="1.3" height="1.8" fill="#B8E0B0"/><rect x="880" y="675" width="1.3" height="1.8" fill="#B8E0B0"/><rect x="871" y="686" width="1.3" height="1.8" fill="#A8D8A0"/><rect x="898" y="656" width="1.3" height="1.8" fill="#98CC98"/><rect x="894" y="673" width="1.3" height="1.8" fill="#B8E0B0"/><rect x="883" y="671" width="1.3" height="1.8" fill="#A8D8A0"/><rect x="887" y="677" width="1.3" height="1.8" fill="#98CC98"/><rect x="896" y="668" width="1.3" height="1.8" fill="#B8E0B0"/><rect x="864" y="691" width="1.3" height="1.8" fill="#B8E0B0"/><rect x="874" y="687" width="1.3" height="1.8" fill="#A8D8A0"/><rect x="891" y="672" width="1.3" height="1.8" fill="#98CC98"/><rect x="879" y="679" width="1.3" height="1.8" fill="#A8D8A0"/><rect x="868" y="697" width="1.3" height="1.8" fill="#98CC98"/><rect x="883" y="675" width="1.3" height="1.8" fill="#A8D8A0"/><rect x="891" y="672" width="1.3" height="1.8" fill="#B8E0B0"/><rect x="885" y="671" width="1.3" height="1.8" fill="#B8E0B0"/><rect x="892" y="668" width="1.3" height="1.8" fill="#A8D8A0"/><rect x="884" y="667" width="1.3" height="1.8" fill="#B8E0B0"/><rect x="856" y="703" width="1.3" height="1.8" fill="#98CC98"/><rect x="900" y="662" width="1.3" height="1.8" fill="#98CC98"/><rect x="880" y="688" width="1.3" height="1.8" fill="#A8D8A0"/><rect x="873" y="681" width="1.3" height="1.8" fill="#A8D8A0"/><rect x="887" y="677" width="1.3" height="1.8" fill="#B8E0B0"/><rect x="881" y="677" width="1.3" height="1.8" fill="#B8E0B0"/><rect x="892" y="674" width="1.3" height="1.8" fill="#B8E0B0"/><rect x="892" y="663" width="1.3" height="1.8" fill="#A8D8A0"/><rect x="889" y="678" width="1.3" height="1.8" fill="#B8E0B0"/><rect x="873" y="685" width="1.3" height="1.8" fill="#98CC98"/><rect x="868" y="691" width="1.3" height="1.8" fill="#A8D8A0"/><rect x="902" y="659" width="1.3" height="1.8" fill="#98CC98"/><rect x="872" y="676" width="1.3" height="1.8" fill="#98CC98"/><rect x="903" y="657" width="1.3" height="1.8" fill="#A8D8A0"/><rect x="886" y="672" width="1.3" height="1.8" fill="#B8E0B0"/><rect x="866" y="690" width="1.3" height="1.8" fill="#B8E0B0"/><rect x="912" y="656" width="1.3" height="1.8" fill="#B8E0B0"/><rect x="879" y="681" width="1.3" height="1.8" fill="#98CC98"/><rect x="909" y="661" width="1.3" height="1.8" fill="#98CC98"/><rect x="881" y="679" width="1.3" height="1.8" fill="#B8E0B0"/><rect x="901" y="668" width="1.3" height="1.8" fill="#B8E0B0"/><rect x="880" y="679" width="1.3" height="1.8" fill="#A8D8A0"/><rect x="884" y="686" width="1.3" height="1.8" fill="#A8D8A0"/><rect x="884" y="671" width="1.3" height="1.8" fill="#A8D8A0"/><rect x="896" y="671" width="1.3" height="1.8" fill="#A8D8A0"/><rect x="873" y="687" width="1.3" height="1.8" fill="#98CC98"/><rect x="904" y="664" width="1.3" height="1.8" fill="#98CC98"/><rect x="900" y="658" width="1.3" height="1.8" fill="#98CC98"/><rect x="886" y="673" width="1.3" height="1.8" fill="#A8D8A0"/><rect x="883" y="678" width="1.3" height="1.8" fill="#98CC98"/><rect x="875" y="689" width="1.3" height="1.8" fill="#A8D8A0"/><rect x="883" y="679" width="1.3" height="1.8" fill="#A8D8A0"/><rect x="874" y="684" width="1.3" height="1.8" fill="#98CC98"/><rect x="887" y="666" width="1.3" height="1.8" fill="#A8D8A0"/><rect x="875" y="688" width="1.3" height="1.8" fill="#A8D8A0"/><rect x="873" y="688" width="1.3" height="1.8" fill="#98CC98"/><rect x="899" y="659" width="1.3" height="1.8" fill="#B8E0B0"/><rect x="883" y="671" width="1.3" height="1.8" fill="#B8E0B0"/><rect x="896" y="657" width="1.3" height="1.8" fill="#B8E0B0"/><rect x="888" y="670" width="1.3" height="1.8" fill="#A8D8A0"/><rect x="898" y="660" width="1.3" height="1.8" fill="#98CC98"/><rect x="872" y="687" width="1.3" height="1.8" fill="#A8D8A0"/><rect x="885" y="677" width="1.3" height="1.8" fill="#98CC98"/><rect x="873" y="683" width="1.3" height="1.8" fill="#B8E0B0"/><rect x="865" y="689" width="1.3" height="1.8" fill="#B8E0B0"/><rect x="903" y="652" width="1.3" height="1.8" fill="#A8D8A0"/><rect x="898" y="667" width="1.3" height="1.8" fill="#98CC98"/><rect x="880" y="681" width="1.3" height="1.8" fill="#A8D8A0"/><rect x="866" y="691" width="1.3" height="1.8" fill="#A8D8A0"/><rect x="867" y="687" width="1.3" height="1.8" fill="#A8D8A0"/><rect x="872" y="685" width="1.3" height="1.8" fill="#90C8A0"/><rect x="873" y="688" width="1.3" height="1.8" fill="#90C8A0"/><rect x="871" y="686" width="1.3" height="1.8" fill="#90C8A0"/><rect x="875" y="685" width="1.3" height="1.8" fill="#A8D8A0"/><rect x="873" y="685" width="1.3" height="1.8" fill="#A8D8A0"/><rect x="873" y="686" width="1.3" height="1.8" fill="#A8D8A0"/><rect x="875" y="681" width="1.3" height="1.8" fill="#A8D8A0"/><rect x="875" y="685" width="1.3" height="1.8" fill="#90C8A0"/><rect x="871" y="687" width="1.3" height="1.8" fill="#A8D8A0"/><rect x="869" y="691" width="1.3" height="1.8" fill="#A8D8A0"/><rect x="872" y="686" width="1.3" height="1.8" fill="#90C8A0"/><rect x="874" y="687" width="1.3" height="1.8" fill="#A8D8A0"/><rect x="871" y="687" width="1.3" height="1.8" fill="#90C8A0"/><rect x="867" y="691" width="1.3" height="1.8" fill="#90C8A0"/><rect x="867" y="689" width="1.3" height="1.8" fill="#A8D8A0"/><rect x="873" y="685" width="1.3" height="1.8" fill="#A8D8A0"/><rect x="869" y="688" width="1.3" height="1.8" fill="#A8D8A0"/><rect x="868" y="690" width="1.3" height="1.8" fill="#A8D8A0"/><rect x="876" y="684" width="1.3" height="1.8" fill="#A8D8A0"/><rect x="872" y="687" width="1.3" height="1.8" fill="#A8D8A0"/><rect x="870" y="686" width="1.3" height="1.8" fill="#90C8A0"/><rect x="867" y="690" width="1.3" height="1.8" fill="#A8D8A0"/><rect x="872" y="686" width="1.3" height="1.8" fill="#90C8A0"/><rect x="870" y="690" width="1.3" height="1.8" fill="#90C8A0"/><rect x="868" y="690" width="1.3" height="1.8" fill="#90C8A0"/><rect x="869" y="689" width="1.3" height="1.8" fill="#A8D8A0"/><rect x="865" y="692" width="1.3" height="1.8" fill="#90C8A0"/><rect x="871" y="688" width="1.3" height="1.8" fill="#90C8A0"/><rect x="875" y="686" width="1.3" height="1.8" fill="#90C8A0"/><rect x="862" y="693" width="1.3" height="1.8" fill="#A8D8A0"/><rect x="879" y="680" width="1.3" height="1.8" fill="#90C8A0"/><rect x="873" y="687" width="1.3" height="1.8" fill="#A8D8A0"/><rect x="869" y="691" width="1.3" height="1.8" fill="#90C8A0"/><rect x="865" y="693" width="1.3" height="1.8" fill="#90C8A0"/><rect x="863" y="693" width="1.3" height="1.8" fill="#90C8A0"/><rect x="867" y="690" width="1.3" height="1.8" fill="#A8D8A0"/><rect x="867" y="691" width="1.3" height="1.8" fill="#90C8A0"/><rect x="871" y="689" width="1.3" height="1.8" fill="#A8D8A0"/><rect x="870" y="689" width="1.3" height="1.8" fill="#90C8A0"/><rect x="861" y="694" width="1.3" height="1.8" fill="#90C8A0"/><rect x="868" y="692" width="1.3" height="1.8" fill="#A8D8A0"/><rect x="871" y="685" width="1.3" height="1.8" fill="#A8D8A0"/><rect x="871" y="687" width="1.3" height="1.8" fill="#90C8A0"/><rect x="874" y="683" width="1.3" height="1.8" fill="#90C8A0"/><rect x="869" y="689" width="1.3" height="1.8" fill="#A8D8A0"/><rect x="874" y="685" width="1.3" height="1.8" fill="#A8D8A0"/><rect x="870" y="687" width="1.3" height="1.8" fill="#90C8A0"/><rect x="868" y="691" width="1.3" height="1.8" fill="#A8D8A0"/><rect x="866" y="689" width="1.3" height="1.8" fill="#A8D8A0"/><rect x="874" y="685" width="1.3" height="1.8" fill="#A8D8A0"/><rect x="867" y="689" width="1.3" height="1.8" fill="#90C8A0"/><rect x="876" y="684" width="1.3" height="1.8" fill="#90C8A0"/><rect x="874" y="686" width="1.3" height="1.8" fill="#90C8A0"/><rect x="874" y="684" width="1.3" height="1.8" fill="#90C8A0"/><rect x="875" y="684" width="1.3" height="1.8" fill="#A8D8A0"/><rect x="869" y="690" width="1.3" height="1.8" fill="#90C8A0"/><rect x="866" y="689" width="1.3" height="1.8" fill="#90C8A0"/><rect x="909" y="681" width="1.500" height="2" fill="#A8D8A0"/><rect x="900" y="685" width="1.500" height="2" fill="#A8D8A0"/><rect x="898" y="683" width="1.500" height="2" fill="#A8D8A0"/><rect x="886" y="688" width="1.500" height="2" fill="#A8D8A0"/><rect x="884" y="686" width="1.500" height="2" fill="#A8D8A0"/><rect x="905" y="676" width="1.500" height="2" fill="#A8D8A0"/>
<ellipse cx="886" cy="674.5" rx="42.5" ry="9.6" transform="rotate(-42.7 886 674.5)" fill="none" stroke="#E81010" stroke-width="1.3"/>
<text x="792" y="763.0" font-family="'Liberation Serif',serif" font-size="13" font-weight="normal" fill="#12337A" text-anchor="end" letter-spacing="-0.3">0.0</text>
<text x="792" y="707.0" font-family="'Liberation Serif',serif" font-size="13" font-weight="normal" fill="#12337A" text-anchor="end" letter-spacing="-0.3">0.5</text>
<text x="857.5" y="772.5" font-family="'Liberation Serif',serif" font-size="13" font-weight="normal" fill="#12337A" text-anchor="middle" letter-spacing="-0.3">0.5</text>
<text x="792" y="651.0" font-family="'Liberation Serif',serif" font-size="13" font-weight="normal" fill="#12337A" text-anchor="end" letter-spacing="-0.3">1.0</text>
<text x="916.5" y="772.5" font-family="'Liberation Serif',serif" font-size="13" font-weight="normal" fill="#12337A" text-anchor="middle" letter-spacing="-0.3">1.0</text>
<text x="792" y="594.0" font-family="'Liberation Serif',serif" font-size="13" font-weight="normal" fill="#12337A" text-anchor="end" letter-spacing="-0.3">1.5</text>
<text x="975.5" y="772.5" font-family="'Liberation Serif',serif" font-size="13" font-weight="normal" fill="#12337A" text-anchor="middle" letter-spacing="-0.3">1.5</text>
<path d="M795 758.5H799M795 702.5H799M857.5 759V762M795 646.5H799M916.5 759V762M795 589.5H799M975.5 759V762M798.5 758V762" stroke="#12337A" fill="none" shape-rendering="crispEdges"/>
<text x="773" y="557" font-family="'Liberation Serif',serif" font-size="12" font-weight="bold" fill="#12337A" text-anchor="start" >RRi-1, c</text>
<text x="1017" y="772" font-family="'Liberation Serif',serif" font-size="12" font-weight="bold" fill="#12337A" text-anchor="end" >RRi, c</text>
</svg>
<div id="rp" class="panel" style="left:1025px;top:109px;width:254px;height:669px">
<div style="left:78px;top:19px;text-decoration:underline">Фон / Дыхание</div>
<div style="left:12px;top:51px">HR, уд/мин</div><div style="left:141px;top:51px">87</div><div class="r" style="left:200px;top:51px">85</div>
<div style="left:12px;top:79px">mRR, мс</div><div style="left:141px;top:79px">691</div><div class="r" style="left:200px;top:79px">705</div>
<div style="left:12px;top:107px">SDNN, мс</div><div style="left:141px;top:107px">38</div><div class="r" style="left:200px;top:107px">123</div>
<div style="left:12px;top:135px">RMSSD, мс</div><div style="left:141px;top:135px">26</div><div class="r" style="left:200px;top:135px">62</div>
<div style="left:12px;top:163px">pNN50, %</div><div style="left:141px;top:163px">5</div><div class="r" style="left:200px;top:163px">33</div>
<div style="left:12px;top:191px">CV, %</div><div style="left:141px;top:191px">6</div><div class="r" style="left:200px;top:191px">17</div>
<div style="left:12px;top:219px">HRV Ti</div><div style="left:141px;top:219px">10</div><div class="r" style="left:200px;top:219px">18</div>
<div style="left:12px;top:251px">TP, мс2</div><div style="left:141px;top:251px">1432</div><div class="r" style="left:200px;top:251px">14875</div>
<div style="left:12px;top:279px">VLF, мс2</div><div style="left:141px;top:279px">194</div><div class="r" style="left:200px;top:279px">1233</div>
<div style="left:12px;top:307px">LF, мс2</div><div style="left:141px;top:307px">558</div><div class="r" style="left:200px;top:307px">237</div>
<div style="left:12px;top:335px">HF, мс2</div><div style="left:141px;top:335px">679</div><div class="r" style="left:200px;top:335px">13312</div>
<div style="left:12px;top:363px">LFnorm, %</div><div style="left:141px;top:363px">45</div><div class="r" style="left:200px;top:363px">2</div>
<div style="left:12px;top:391px">HFnorm, %</div><div style="left:141px;top:391px">55</div><div class="r" style="left:200px;top:391px">98</div>
<div style="left:12px;top:419px">LF/HF</div><div style="left:141px;top:419px">0.82</div><div class="r" style="left:200px;top:419px">0.02</div>
<div style="left:12px;top:451px">%VLF</div><div style="left:141px;top:451px">14</div><div class="r" style="left:200px;top:451px">8</div>
<div style="left:12px;top:479px">%LF</div><div style="left:141px;top:479px">39</div><div class="r" style="left:200px;top:479px">2</div>
<div style="left:12px;top:507px">%HF</div><div style="left:141px;top:507px">47</div><div class="r" style="left:200px;top:507px">90</div>
<div style="left:12px;top:543px">Krr</div><div style="left:170px;top:543px">1.71</div>
<div style="left:0;top:645px;width:252px;height:23px;background:#fff;border-top:1px solid #000;border-right:1px solid #000;letter-spacing:0"></div>
<div style="left:6px;top:645px;width:65px;height:19px;background:#FFFEEB;border:1px solid #000;border-top:none;font:bold 11px 'Liberation Sans',sans-serif;color:#14408C;padding:4px 0 0 5px;line-height:13px;letter-spacing:.45px">Дыхание</div>
<div style="left:77px;top:650px;font:11px 'Liberation Sans',sans-serif;color:#000;line-height:13px;letter-spacing:.3px">Отдых</div>
<div style="left:117px;top:648px;width:1px;height:14px;background:#999"></div>
</div>
<div id="txt" class="abs">
<div style="left:29.5px;top:1px;letter-spacing:-0.020px"><u>Исходное состояние (фоновая проба):</u></div>
<div style="left:1.5px;top:18px;letter-spacing:-0.047px">Характер регуляции ритма в покое (фон) отражает усиление симпатических влияний и может свидетельствовать о возможных паталогических изменениях в регуляции сердечного</div>
<div style="left:1.5px;top:35px;letter-spacing:0.025px">ритма. Возможны изменения сосудистого тонуса. Уровень нейрогуморальной регуляции (мощность спектра ВСР) в покое: низкий, при относительном преобладании</div>
<div style="left:1.5px;top:52px;letter-spacing:-0.004px">парасимпатической регуляции.</div>
<div style="left:29.5px;top:69px;letter-spacing:-0.023px"><u>Проба с глубоким дыханием.</u></div>
<div style="left:10.5px;top:86px;letter-spacing:-0.017px">Реакция на дыхательную пробу нормальная, с усилением парасимпатической активности (Krr: 1.71).</div>
<div style="left:29.5px;top:103px;letter-spacing:0.054px"><u>Фаза восстановления (отдых).</u></div>
<div style="left:10.5px;top:120px;letter-spacing:-0.018px">На этапе восстановления произошло восстановление параметров сердечного ритма к исходным с незначительным усилением симпатических влияний.</div>
</div>
<div id="status" class="abs"><span style="left:5px">test 1 1</span><i style="left:298px"></i><span style="left:335px">31 лет</span><i style="left:398px"></i><span style="left:410px">Ж</span><i style="left:428px"></i><span style="left:451px">Запись: 18.12.2008 11:13:37</span><i style="left:608px"></i><span style="left:617px">Схема отведений:</span><i style="left:833px"></i></div>
<div id="task" class="abs">
<div id="start" class="abs"><svg class="abs" style="left:9px;top:5px" width="22" height="20" viewBox="0 0 22 20"><path d="M2 4 C5 2 7 2 10 4 L8.500 10 C6 8 4 8 1 10Z" fill="#E8502A"/><path d="M11 4.500 C14 6.500 16 6.500 19 4.500 L17.500 10.500 C14.500 12.500 12.500 12.500 9.500 10.500Z" fill="#7CC43C"/><path d="M0.800 11 C3.800 9 5.800 9 8.300 11 L6.800 17 C4.300 15 2.300 15 -0.700 17Z" fill="#3C8CF0"/><path d="M9.300 11.500 C12.300 13.500 14.300 13.500 17.300 11.500 L15.800 17.500 C12.800 19.500 10.800 19.500 7.800 17.500Z" fill="#F8C828"/></svg><b>start</b></div>
<svg class="abs" style="left:104px;top:4px" width="92" height="24" viewBox="104 998 92 24">
<g id="ie1"><text x="107" y="1015.800" font-family="'Liberation Sans',sans-serif" font-style="italic" font-weight="bold" font-size="26" fill="#3FA8F4" stroke="#1C6CD0" stroke-width=".4">e</text><path d="M109 1011 C105 1016 112 1015 118 1009.500 C124 1004 126 1000 121 1002" fill="none" stroke="#A8D8FF" stroke-width="1.200"/></g>
<rect x="132.800" y="1001.800" width="14.400" height="14.400" fill="#FFF6DC" stroke="#F49A1C" stroke-width="1.800"/><circle cx="140" cy="1009" r="4.300" fill="none" stroke="#B87818" stroke-width="1.200"/><path d="M140 1006v3h2.500" stroke="#B87818" fill="none" stroke-width="1.100"/>
<g transform="translate(46,0)"><text x="107" y="1015.800" font-family="'Liberation Sans',sans-serif" font-style="italic" font-weight="bold" font-size="26" fill="#3FA8F4" stroke="#1C6CD0" stroke-width=".4">e</text><path d="M109 1011 C105 1016 112 1015 118 1009.500 C124 1004 126 1000 121 1002" fill="none" stroke="#A8D8FF" stroke-width="1.200"/></g>
<path d="M183.500 1001.500l2.500 2.500-2.500 2.500M187.500 1001.500l2.500 2.500-2.500 2.500" fill="none" stroke="#D8E8FF" stroke-width="1.200"/></svg>
<div class="tbtn" style="left:199px;width:158px"><svg class="abs" style="left:8px;top:3px" width="16" height="16"><rect x=".5" y=".5" width="15" height="15" rx="2" fill="#fff" stroke="#88A"/><path d="M3 3 C8 4 12 8 13 13 C9 12 5 9 3 3Z" fill="#2060C0"/><path d="M4 3 C8 5 11 8 12 12" stroke="#60D0A0" fill="none"/></svg><span>Adobe Photoshop</span></div>
<div class="tbtn" style="left:358px;width:159px"><svg class="abs" style="left:9px;top:5px" width="18" height="12"><path d="M1 5 L9 1 L17 5 L9 9Z" fill="#D8D8D8" stroke="#666" stroke-width=".6"/><path d="M1 5 L9 9 L17 5 L17 8 L9 11.500 L1 8Z" fill="#888"/></svg><span style="left:29px">Removable Disk (E:)</span></div>
<div class="tbtn act" style="left:519px;width:159px"><svg class="abs" style="left:9px;top:3px" width="17" height="17" viewBox="0 0 18 17"><rect x="0.500" y="0.500" width="12" height="15" fill="#fff" stroke="#666"/><rect x="1" y="2" width="3" height="2" fill="#555"/><rect x="1" y="6" width="3" height="2" fill="#555"/><rect x="1" y="10" width="3" height="2" fill="#555"/><path d="M9.500 14 C4 9.500 3.500 5.500 6 4 C8 3 9.300 4.500 9.500 5.500 C9.700 4.500 11.500 3 13.500 4 C16 5.500 15 9.500 9.500 14Z" fill="#E02020" stroke="#A01010" stroke-width=".6"/></svg><span>CardioLab+</span></div>
<div class="abs" style="left:1099px;top:9px;font:11px 'Liberation Sans',sans-serif;color:#A8C8F8">Desktop</div>
<svg class="abs" style="left:1146px;top:6px" width="10" height="8"><path d="M1.500 1l2.500 2.500-2.500 2.500M5.500 1l2.500 2.500-2.500 2.500" fill="none" stroke="#D8E8FF" stroke-width="1.200"/></svg>
<div id="tray" class="abs" style="left:1170px;width:110px"><svg class="abs" style="left:-11px;top:4px;overflow:visible" width="80" height="22"><circle cx="11" cy="11" r="8.500" fill="#2C7CE8" stroke="#B8DCFF" stroke-width="1.200"/><path d="M13 7l-4 4 4 4" stroke="#fff" stroke-width="2" fill="none"/><path d="M22 6 L36 6 L36 14 L30 19 L24 16Z" fill="#A0E040" stroke="#508010" stroke-width=".8"/><path d="M25 10l4 4 5-6" stroke="#fff" stroke-width="1.800" fill="none"/><ellipse cx="47" cy="11" rx="5.500" ry="8" fill="#2030C0"/><path d="M44 7l6 7-3 3V5l3 3-6 7" stroke="#E02020" stroke-width="1.200" fill="none"/><rect x="57.500" y="3.500" width="14" height="12" fill="#2030A0" stroke="#D0D8F0" stroke-width="1.200"/><rect x="60" y="6" width="9" height="7" fill="#5070E0"/><path d="M56 19h18" stroke="#D0D8F0" stroke-width="2"/></svg><div class="abs" style="left:68px;top:9px;font:11px 'Liberation Sans',sans-serif;color:#fff">13:10</div></div>
</div>
</body></html>
